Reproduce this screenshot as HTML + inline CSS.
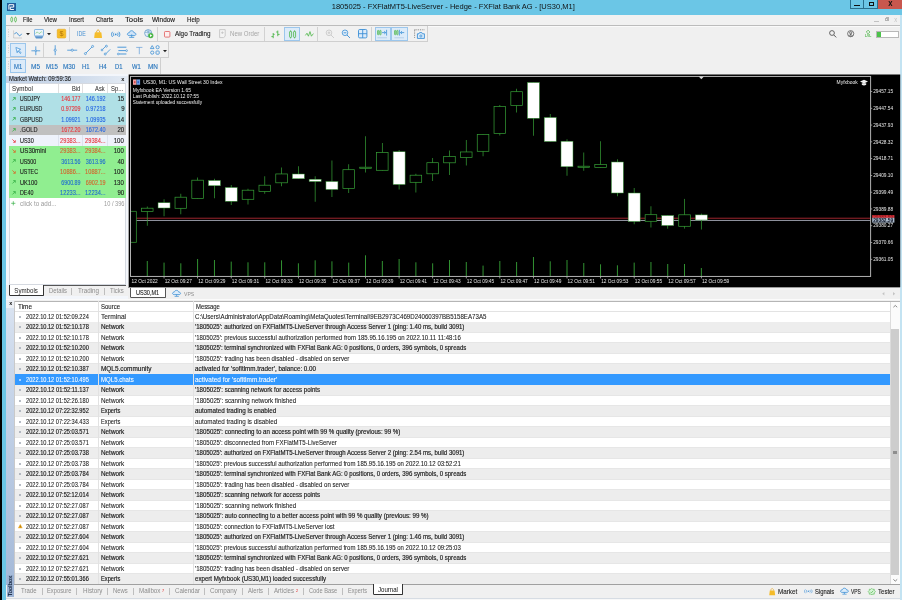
<!DOCTYPE html>
<html lang="en"><head><meta charset="utf-8"><title>1805025 - FXFlatMT5-LiveServer - Hedge - FXFlat Bank AG - [US30,M1]</title>
<style>html,body{margin:0;padding:0}body{width:902px;height:600px;overflow:hidden;position:relative;background:#f0f0f0;font-family:"Liberation Sans", sans-serif;}
#w{will-change:transform;position:absolute;left:0;top:0;width:902px;height:600px;overflow:hidden}
#w div,#w svg,#w span{position:absolute}#w span{white-space:pre}svg{overflow:visible}</style></head>
<body><div id="w">
<div style="left:0.00px;top:0.00px;width:902.00px;height:600.00px;background:#6bc6e6;"></div>
<div style="left:0.00px;top:0.00px;width:2.40px;height:600.00px;background:#000;"></div>
<div style="left:6.20px;top:14.60px;width:894.00px;height:585.40px;background:#f0f0f0;"></div>
<div style="left:900.20px;top:14.60px;width:1.80px;height:585.40px;background:#c3e3f2;"></div>
<div style="left:7.20px;top:2.50px;width:8.60px;height:8.20px;background:#1d5c9b;"></div>
<svg style="left:7.2px;top:2.5px" width="8.6" height="8.2" viewBox="0 0 86 82"><path d="M19 66V17H67V41H33V65H69" fill="none" stroke="#fff" stroke-width="10"/></svg>
<div style="left:849.50px;top:0.00px;width:14.70px;height:9.30px;background:#6bc6e6;box-sizing:border-box;border:0.6px solid #2a6f8c;border-top:none"></div>
<div style="left:864.40px;top:0.00px;width:13.60px;height:9.30px;background:#6bc6e6;box-sizing:border-box;border:0.6px solid #2a6f8c;border-top:none;border-left:none"></div>
<div style="left:878.00px;top:0.00px;width:23.50px;height:9.30px;background:#c8574e;"></div>
<div style="left:854.20px;top:4.60px;width:5.40px;height:1.50px;background:#111;"></div>
<div style="left:869.20px;top:2.40px;width:4.60px;height:3.60px;background:transparent;box-sizing:border-box;border:1.1px solid #111;border-top-width:1.5px"></div>
<div style="left:6.20px;top:14.60px;width:894.00px;height:10.60px;background:#f1f1f1;"></div>
<div style="left:6.20px;top:24.90px;width:894.00px;height:0.90px;background:#bcbcbc;"></div>
<div style="left:6.20px;top:25.80px;width:894.00px;height:0.60px;background:#fafafa;"></div>
<svg style="left:9.8px;top:16.2px" width="7.4" height="7" viewBox="0 0 74 70"><g fill="none" stroke="#4cb648" stroke-width="7"><rect x="8" y="16" width="18" height="38" rx="5"/><rect x="46" y="16" width="18" height="38" rx="5"/><path d="M17 6v10M17 54v10M55 6v10M55 54v10"/></g></svg>
<div style="left:874.00px;top:20.80px;width:4.80px;height:0.80px;background:#c2c2c2;"></div>
<div style="left:884.60px;top:18.30px;width:3.20px;height:3.20px;background:transparent;box-sizing:border-box;border:0.7px solid #b4b4b4"></div>
<div style="left:885.80px;top:17.40px;width:3.20px;height:3.20px;background:transparent;box-sizing:border-box;border:0.7px solid #b4b4b4;border-left:none;border-bottom:none"></div>
<div style="left:6.20px;top:25.80px;width:421.50px;height:16.10px;background:#f1f1f1;box-sizing:border-box;border-right:0.7px solid #cfcfcf;border-bottom:0.7px solid #cfcfcf"></div>
<div style="left:6.20px;top:41.90px;width:163.20px;height:15.90px;background:#f1f1f1;box-sizing:border-box;border-right:0.7px solid #cfcfcf;border-bottom:0.7px solid #cfcfcf"></div>
<div style="left:6.20px;top:57.80px;width:155.20px;height:16.60px;background:#f1f1f1;box-sizing:border-box;border-right:0.7px solid #cfcfcf"></div>
<div style="left:69.45px;top:27.00px;width:0.70px;height:13.80px;background:#d2d2d2;"></div>
<div style="left:157.15px;top:27.00px;width:0.70px;height:13.80px;background:#d2d2d2;"></div>
<div style="left:264.45px;top:27.00px;width:0.70px;height:13.80px;background:#d2d2d2;"></div>
<div style="left:317.15px;top:27.00px;width:0.70px;height:13.80px;background:#d2d2d2;"></div>
<div style="left:371.15px;top:27.00px;width:0.70px;height:13.80px;background:#d2d2d2;"></div>
<div style="left:42.85px;top:43.20px;width:0.70px;height:13.40px;background:#d2d2d2;"></div>
<div style="left:8.3px;top:29px;width:1px;height:10px;background:repeating-linear-gradient(#d6d6d6 0 0.8px,transparent 0.8px 1.7px)"></div>
<div style="left:8.3px;top:45px;width:1px;height:10px;background:repeating-linear-gradient(#d6d6d6 0 0.8px,transparent 0.8px 1.7px)"></div>
<div style="left:8.3px;top:61px;width:1px;height:10px;background:repeating-linear-gradient(#d6d6d6 0 0.8px,transparent 0.8px 1.7px)"></div>
<div style="left:284.00px;top:26.70px;width:15.80px;height:14.20px;background:#dcebf9;box-sizing:border-box;border:0.8px solid #9bc6ec"></div>
<div style="left:374.50px;top:26.70px;width:16.20px;height:14.20px;background:#dcebf9;box-sizing:border-box;border:0.8px solid #9bc6ec"></div>
<div style="left:391.40px;top:26.70px;width:16.40px;height:14.20px;background:#dcebf9;box-sizing:border-box;border:0.8px solid #9bc6ec"></div>
<div style="left:10.40px;top:43.30px;width:15.60px;height:13.30px;background:#dcebf9;box-sizing:border-box;border:0.8px solid #9bc6ec"></div>
<div style="left:10.40px;top:59.20px;width:15.60px;height:13.60px;background:#dcebf9;box-sizing:border-box;border:0.8px solid #9bc6ec"></div>
<svg style="left:13.00px;top:29.50px" width="9.20" height="9.00" viewBox="0 0 92 90"><path d="M6 4v76h84" fill="none" stroke="#b9b9b9" stroke-width="6"/><path d="M16 42C26 20 40 22 50 42S74 62 86 38" fill="none" stroke="#2f86cc" stroke-width="9"/></svg>
<svg style="left:25.50px;top:33.20px" width="4.00" height="2.20" viewBox="0 0 40 22"><path d="M0 0h40L20 22z" fill="#222"/></svg>
<svg style="left:34.00px;top:28.90px" width="10.00" height="9.90" viewBox="0 0 100 99"><rect x="5" y="5" width="90" height="64" rx="6" fill="#eef5fc" stroke="#6aa6dc" stroke-width="8"/><path d="M18 44c8-16 16-16 24-6s16 8 22-2 10-10 18-2" fill="none" stroke="#4cb648" stroke-width="7" stroke-dasharray="9 4"/><path d="M6 72h88l-14 24H20z" fill="#5a93cc"/></svg>
<svg style="left:47.00px;top:33.20px" width="4.00" height="2.20" viewBox="0 0 40 22"><path d="M0 0h40L20 22z" fill="#222"/></svg>
<svg style="left:57.20px;top:29.30px" width="9.00" height="9.30" viewBox="0 0 90 93"><rect x="2" y="2" width="86" height="89" rx="12" fill="#f6bd27" stroke="#e3a21a" stroke-width="5"/><text x="45" y="72" font-size="72" font-family="Liberation Sans, sans-serif" text-anchor="middle" fill="#b47708">$</text></svg>
<svg style="left:94.40px;top:29.00px" width="8.20" height="9.40" viewBox="0 0 82 94"><path d="M26 34c0-32 30-32 30 0" fill="none" stroke="#e2a21a" stroke-width="10"/><path d="M14 32h54c4 0 5 2 6 6l6 46c0 4-2 6-6 6H8c-4 0-6-2-6-6l6-46c1-4 2-6 6-6z" fill="#f5bd2c"/></svg>
<svg style="left:110.60px;top:30.60px" width="9.40" height="6.80" viewBox="0 0 94 68"><g fill="none" stroke="#3b8fd6" stroke-width="9"><path d="M30 18c-8 10-8 22 0 32M64 18c8 10 8 22 0 32M16 8c-14 16-14 36 0 52M78 8c14 16 14 36 0 52"/></g><circle cx="47" cy="34" r="9" fill="#3b8fd6"/></svg>
<svg style="left:127.30px;top:30.00px" width="9.40" height="8.20" viewBox="0 0 94 82"><path d="M22 56c-26 0-22-30 0-28 4-28 44-28 48 0 24-2 26 28 2 28z" fill="#cfe3f7" stroke="#3b8fd6" stroke-width="8"/><path d="M47 44v28M22 74h50" stroke="#3b8fd6" stroke-width="8" fill="none"/></svg>
<svg style="left:144.20px;top:29.30px" width="9.60" height="9.40" viewBox="0 0 96 94"><circle cx="42" cy="42" r="36" fill="#e6f0fa" stroke="#6a9fc8" stroke-width="8"/><path d="M42 6v72M8 34h66M22 14c14 14 30 14 44 0" fill="none" stroke="#6a9fc8" stroke-width="6"/><circle cx="68" cy="66" r="26" fill="#4cb648"/><path d="M60 52l22 14-22 14z" fill="#fff"/></svg>
<svg style="left:164.30px;top:30.60px" width="6.40" height="6.60" viewBox="0 0 64 66"><rect x="5" y="5" width="54" height="56" rx="8" fill="#fdeeee" stroke="#e05a5a" stroke-width="8"/></svg>
<svg style="left:219.30px;top:29.40px" width="6.80" height="9.20" viewBox="0 0 68 92"><path d="M6 6h56v66l-16 14H6z" fill="#f4f4f4" stroke="#b9b9b9" stroke-width="7"/><path d="M34 24v26M20 37h28" stroke="#b9b9b9" stroke-width="6"/></svg>
<svg style="left:271.20px;top:29.60px" width="9.40" height="8.80" viewBox="0 0 94 88"><g fill="none" stroke="#4cb648" stroke-width="9"><path d="M22 30v52M4 66h18M22 44h14M68 6v56M52 20h16M68 44h18"/></g></svg>
<svg style="left:288.90px;top:29.60px" width="7.20" height="8.80" viewBox="0 0 72 88"><g fill="none" stroke="#4cb648" stroke-width="8"><rect x="6" y="14" width="20" height="60" rx="6"/><rect x="46" y="14" width="20" height="60" rx="6"/><path d="M16 4v10M16 74v10M56 4v10M56 74v10"/></g></svg>
<svg style="left:305.00px;top:30.60px" width="8.80" height="6.80" viewBox="0 0 88 68"><path d="M4 44l16-22 14 30 16-46 14 46 20-26" fill="none" stroke="#4cb648" stroke-width="8"/></svg>
<svg style="left:324.60px;top:29.40px" width="9.60" height="9.60" viewBox="0 0 96 96"><circle cx="40" cy="38" r="28" fill="none" stroke="#c4c4c4" stroke-width="8"/><path d="M60 60l30 30M26 38h28M40 24v28" stroke="#c4c4c4" stroke-width="8" fill="none"/></svg>
<svg style="left:341.30px;top:29.40px" width="9.60" height="9.60" viewBox="0 0 96 96"><circle cx="40" cy="38" r="28" fill="#e3effa" stroke="#3b8fd6" stroke-width="8"/><path d="M60 60l30 30M26 38h28" stroke="#3b8fd6" stroke-width="9" fill="none"/></svg>
<svg style="left:358.20px;top:29.40px" width="9.40" height="9.40" viewBox="0 0 94 94"><rect x="5" y="5" width="84" height="84" rx="12" fill="#dcebf9" stroke="#3b8fd6" stroke-width="9"/><path d="M47 5v84M5 47h84" stroke="#3b8fd6" stroke-width="9"/></svg>
<svg style="left:377.30px;top:29.40px" width="10.60" height="9.60" viewBox="0 0 106 96"><g fill="none" stroke="#4cb648" stroke-width="8"><rect x="6" y="14" width="12" height="44" rx="5"/><rect x="28" y="14" width="12" height="44" rx="5"/></g><path d="M50 36h36M72 22l16 14-16 14M96 8v58" fill="none" stroke="#3b8fd6" stroke-width="8"/><path d="M4 88h96" stroke="#9dbfe0" stroke-width="6"/></svg>
<svg style="left:394.30px;top:29.40px" width="10.60" height="9.60" viewBox="0 0 106 96"><g fill="none" stroke="#4cb648" stroke-width="8"><rect x="6" y="14" width="12" height="44" rx="5"/><rect x="28" y="14" width="12" height="44" rx="5"/></g><path d="M54 8v58M66 36h36M80 22l-16 14 16 14" fill="none" stroke="#3b8fd6" stroke-width="8"/><path d="M4 88h96" stroke="#9dbfe0" stroke-width="6"/></svg>
<svg style="left:414.00px;top:29.00px" width="11.00" height="10.00" viewBox="0 0 110 100"><path d="M6 8h98M6 8v80" stroke="#555" stroke-width="7" stroke-dasharray="9 9" fill="none"/><path d="M34 48h16l6-12h22l6 12h20v46H34z" fill="#e0eefb" stroke="#3b8fd6" stroke-width="9"/><circle cx="69" cy="70" r="11" fill="none" stroke="#3b8fd6" stroke-width="8"/></svg>
<svg style="left:829.00px;top:29.60px" width="7.60" height="7.80" viewBox="0 0 76 78"><circle cx="30" cy="30" r="24" fill="none" stroke="#444" stroke-width="8"/><path d="M48 50l24 24" stroke="#444" stroke-width="9"/></svg>
<svg style="left:847.00px;top:30.00px" width="7.40" height="7.40" viewBox="0 0 74 74"><circle cx="37" cy="37" r="31" fill="none" stroke="#444" stroke-width="7"/><circle cx="37" cy="28" r="11" fill="none" stroke="#444" stroke-width="7"/><path d="M37 40v28M37 44L16 60M37 44l21 16" stroke="#444" stroke-width="6" fill="none"/></svg>
<svg style="left:866.00px;top:29.80px" width="4.20" height="4.00" viewBox="0 0 42 40"><path d="M21 2l18 18-18 18L3 20z" fill="none" stroke="#4cb648" stroke-width="8"/></svg>
<div style="left:876.00px;top:31.10px;width:22.60px;height:6.70px;background:#fff;box-sizing:border-box;border:0.7px solid #b8b8b8"></div>
<div style="left:876.70px;top:31.80px;width:4.20px;height:5.30px;background:#4cc24a;"></div>
<svg style="left:15.00px;top:46.80px" width="7.20" height="7.20" viewBox="0 0 84 90"><path d="M8 6l60 22-24 12 30 34-10 8-30-34-10 24z" fill="#eef5fc" stroke="#3b8fd6" stroke-width="9" stroke-linejoin="round"/></svg>
<svg style="left:30.60px;top:45.60px" width="9.60" height="9.60" viewBox="0 0 96 96"><path d="M48 4v88M4 48h88" stroke="#3b8fd6" stroke-width="8"/><circle cx="48" cy="48" r="8" fill="#f0f0f0" stroke="#3b8fd6" stroke-width="6"/></svg>
<svg style="left:53.40px;top:45.20px" width="4.40" height="10.40" viewBox="0 0 44 104"><path d="M22 2v100" stroke="#3b8fd6" stroke-width="8"/><circle cx="22" cy="52" r="11" fill="#f0f0f0" stroke="#3b8fd6" stroke-width="7"/></svg>
<svg style="left:67.00px;top:48.20px" width="10.40" height="4.40" viewBox="0 0 104 44"><path d="M2 22h100" stroke="#3b8fd6" stroke-width="8"/><circle cx="52" cy="22" r="11" fill="#f0f0f0" stroke="#3b8fd6" stroke-width="7"/></svg>
<svg style="left:84.00px;top:45.40px" width="10.00" height="10.00" viewBox="0 0 100 100"><path d="M16 84L84 16" stroke="#3b8fd6" stroke-width="8"/><circle cx="14" cy="86" r="10" fill="#f0f0f0" stroke="#3b8fd6" stroke-width="7"/><circle cx="86" cy="14" r="10" fill="#f0f0f0" stroke="#3b8fd6" stroke-width="7"/></svg>
<svg style="left:100.60px;top:45.40px" width="10.00" height="10.00" viewBox="0 0 100 100"><path d="M8 52L52 8M44 92L92 44" stroke="#3b8fd6" stroke-width="8"/><circle cx="54" cy="12" r="10" fill="#f0f0f0" stroke="#3b8fd6" stroke-width="7"/><circle cx="10" cy="50" r="9" fill="#f0f0f0" stroke="#3b8fd6" stroke-width="7"/><circle cx="42" cy="90" r="10" fill="#f0f0f0" stroke="#3b8fd6" stroke-width="7"/></svg>
<svg style="left:117.30px;top:45.80px" width="10.80" height="9.40" viewBox="0 0 108 94"><path d="M4 12h90M14 46h80M14 80h80" stroke="#3b8fd6" stroke-width="9"/><circle cx="96" cy="46" r="9" fill="#f0f0f0" stroke="#3b8fd6" stroke-width="6"/><circle cx="12" cy="80" r="9" fill="#f0f0f0" stroke="#3b8fd6" stroke-width="6"/></svg>
<svg style="left:136.20px;top:46.50px" width="6.60" height="7.20" viewBox="0 0 66 72"><path d="M2 4h62M33 4v68" stroke="#5f9bd6" stroke-width="7" fill="none"/></svg>
<svg style="left:150.30px;top:45.40px" width="10.00" height="10.00" viewBox="0 0 100 100"><g fill="none" stroke="#3b8fd6" stroke-width="8"><path d="M22 6l18 30H4z"/><circle cx="76" cy="22" r="16"/><circle cx="22" cy="76" r="16"/><rect x="60" y="60" width="32" height="32" rx="6"/></g></svg>
<svg style="left:163.20px;top:49.50px" width="4.00" height="2.20" viewBox="0 0 40 22"><path d="M0 0h40L20 22z" fill="#222"/></svg>
<div style="left:6.20px;top:74.40px;width:122.00px;height:225.00px;background:#f3f6fb;"></div>
<div style="left:6.20px;top:75.50px;width:121.80px;height:7.40px;background:linear-gradient(90deg,#c4d3e7,#ccd9ea 55%,#e4ebf4);"></div>
<div style="left:8.60px;top:83.40px;width:117.20px;height:201.80px;background:#fff;box-sizing:border-box;border:0.6px solid #d5d9e0"></div>
<div style="left:8.90px;top:93.00px;width:116.60px;height:0.50px;background:#e2e2e2;"></div>
<div style="left:58.10px;top:83.80px;width:0.60px;height:9.40px;background:#e0e0e0;"></div>
<div style="left:82.30px;top:83.80px;width:0.60px;height:9.40px;background:#e0e0e0;"></div>
<div style="left:107.10px;top:83.80px;width:0.60px;height:9.40px;background:#e0e0e0;"></div>
<div style="left:8.90px;top:93.30px;width:116.70px;height:10.52px;background:#b0e0e6;"></div>
<svg style="left:11.80px;top:96.53px" width="3.90" height="3.90" viewBox="0 0 39 39"><path d="M4 35L32 7M12 6h21v21" fill="none" stroke="#35b045" stroke-width="8"/></svg>
<div style="left:8.90px;top:103.77px;width:116.70px;height:10.52px;background:#b0e0e6;"></div>
<svg style="left:11.80px;top:107.00px" width="3.90" height="3.90" viewBox="0 0 39 39"><path d="M4 35L32 7M12 6h21v21" fill="none" stroke="#35b045" stroke-width="8"/></svg>
<div style="left:8.90px;top:114.24px;width:116.70px;height:10.52px;background:#b0e0e6;"></div>
<svg style="left:11.80px;top:117.47px" width="3.90" height="3.90" viewBox="0 0 39 39"><path d="M4 35L32 7M12 6h21v21" fill="none" stroke="#35b045" stroke-width="8"/></svg>
<div style="left:8.90px;top:124.71px;width:116.70px;height:10.52px;background:#c0c0c0;"></div>
<svg style="left:11.80px;top:127.95px" width="3.90" height="3.90" viewBox="0 0 39 39"><path d="M4 35L32 7M12 6h21v21" fill="none" stroke="#35b045" stroke-width="8"/></svg>
<div style="left:8.90px;top:135.18px;width:116.70px;height:10.52px;background:#eef2fb;"></div>
<svg style="left:11.80px;top:138.72px" width="3.90" height="3.90" viewBox="0 0 39 39"><path d="M4 4l28 28M12 33h21V12" fill="none" stroke="#e8343c" stroke-width="8"/></svg>
<div style="left:58.10px;top:135.18px;width:0.60px;height:10.47px;background:#dde2ee;"></div>
<div style="left:82.30px;top:135.18px;width:0.60px;height:10.47px;background:#dde2ee;"></div>
<div style="left:107.10px;top:135.18px;width:0.60px;height:10.47px;background:#dde2ee;"></div>
<div style="left:8.90px;top:145.65px;width:116.70px;height:10.52px;background:#90ee90;"></div>
<svg style="left:11.80px;top:149.19px" width="3.90" height="3.90" viewBox="0 0 39 39"><path d="M4 4l28 28M12 33h21V12" fill="none" stroke="#d86a2a" stroke-width="8"/></svg>
<div style="left:8.90px;top:156.12px;width:116.70px;height:10.52px;background:#90ee90;"></div>
<svg style="left:11.80px;top:159.36px" width="3.90" height="3.90" viewBox="0 0 39 39"><path d="M4 35L32 7M12 6h21v21" fill="none" stroke="#35b045" stroke-width="8"/></svg>
<div style="left:8.90px;top:166.59px;width:116.70px;height:10.52px;background:#90ee90;"></div>
<svg style="left:11.80px;top:170.12px" width="3.90" height="3.90" viewBox="0 0 39 39"><path d="M4 4l28 28M12 33h21V12" fill="none" stroke="#d86a2a" stroke-width="8"/></svg>
<div style="left:8.90px;top:177.06px;width:116.70px;height:10.52px;background:#90ee90;"></div>
<svg style="left:11.80px;top:180.30px" width="3.90" height="3.90" viewBox="0 0 39 39"><path d="M4 35L32 7M12 6h21v21" fill="none" stroke="#35b045" stroke-width="8"/></svg>
<div style="left:8.90px;top:187.53px;width:116.70px;height:10.52px;background:#90ee90;"></div>
<svg style="left:11.80px;top:190.77px" width="3.90" height="3.90" viewBox="0 0 39 39"><path d="M4 35L32 7M12 6h21v21" fill="none" stroke="#35b045" stroke-width="8"/></svg>
<svg style="left:11.40px;top:201.00px" width="4.60" height="4.60" viewBox="0 0 46 46"><path d="M23 2v42M2 23h42" stroke="#35b045" stroke-width="7"/></svg>
<div style="left:6.20px;top:285.20px;width:122.00px;height:11.00px;background:#f0f0f0;"></div>
<div style="left:8.60px;top:285.00px;width:117.40px;height:0.70px;background:#555;"></div>
<div style="left:9.30px;top:284.90px;width:34.40px;height:10.70px;background:#fff;box-sizing:border-box;border:0.8px solid #333;border-top:none;border-radius:0 0 1.5px 1.5px"></div>
<svg style="left:128px;top:74px;overflow:hidden" width="773.00" height="214.00" viewBox="0 0 773.00 214.00" font-family="Liberation Sans, sans-serif"><rect x="0.70" y="0.50" width="771.50" height="212.70" fill="#000"/><rect x="2.60" y="143.60" width="740.00" height="1.5" fill="#6f1a20"/><rect x="2.60" y="146.00" width="740.00" height="1.0" fill="#8d909c"/><path d="M3.00 137.40H8.45V168.40H3.00" fill="#000" stroke="#37a237" stroke-width="0.7"/><rect x="18.90" y="132.50" width="0.7" height="19.25" fill="#37a237"/><rect x="13.45" y="134.20" width="11.60" height="3.35" fill="#000" stroke="#37a237" stroke-width="0.7"/><rect x="18.80" y="187.00" width="0.9" height="15.40" fill="#37a237"/><rect x="35.69" y="125.25" width="0.7" height="17.00" fill="#37a237"/><rect x="30.04" y="128.75" width="12.00" height="5.25" fill="#fff" stroke="#2f8f2f" stroke-width="0.5"/><rect x="35.59" y="188.60" width="0.9" height="13.80" fill="#37a237"/><rect x="52.48" y="119.75" width="0.7" height="20.50" fill="#37a237"/><rect x="47.03" y="123.20" width="11.60" height="11.10" fill="#000" stroke="#37a237" stroke-width="0.7"/><rect x="52.38" y="189.30" width="0.9" height="13.10" fill="#37a237"/><rect x="69.27" y="103.50" width="0.7" height="21.25" fill="#37a237"/><rect x="63.82" y="106.20" width="11.60" height="18.35" fill="#000" stroke="#37a237" stroke-width="0.7"/><rect x="69.17" y="185.00" width="0.9" height="17.40" fill="#37a237"/><rect x="86.06" y="104.75" width="0.7" height="19.50" fill="#37a237"/><rect x="80.41" y="106.50" width="12.00" height="5.25" fill="#fff" stroke="#2f8f2f" stroke-width="0.5"/><rect x="85.96" y="186.00" width="0.9" height="16.40" fill="#37a237"/><rect x="102.85" y="111.00" width="0.7" height="20.00" fill="#37a237"/><rect x="97.20" y="113.50" width="12.00" height="13.75" fill="#fff" stroke="#2f8f2f" stroke-width="0.5"/><rect x="102.75" y="187.60" width="0.9" height="14.80" fill="#37a237"/><rect x="119.64" y="114.75" width="0.7" height="15.75" fill="#37a237"/><rect x="114.19" y="116.20" width="11.60" height="9.10" fill="#000" stroke="#37a237" stroke-width="0.7"/><rect x="119.54" y="188.30" width="0.9" height="14.10" fill="#37a237"/><rect x="136.43" y="102.25" width="0.7" height="17.50" fill="#37a237"/><rect x="130.98" y="111.20" width="11.60" height="6.35" fill="#000" stroke="#37a237" stroke-width="0.7"/><rect x="136.33" y="188.30" width="0.9" height="14.10" fill="#37a237"/><rect x="153.22" y="93.50" width="0.7" height="18.75" fill="#37a237"/><rect x="147.77" y="99.95" width="11.60" height="8.85" fill="#000" stroke="#37a237" stroke-width="0.7"/><rect x="153.12" y="186.30" width="0.9" height="16.10" fill="#37a237"/><rect x="170.01" y="92.25" width="0.7" height="12.50" fill="#37a237"/><rect x="164.36" y="100.00" width="12.00" height="4.75" fill="#fff" stroke="#2f8f2f" stroke-width="0.5"/><rect x="169.91" y="189.30" width="0.9" height="13.10" fill="#37a237"/><rect x="186.80" y="102.25" width="0.7" height="25.50" fill="#37a237"/><rect x="181.15" y="105.25" width="12.00" height="2.25" fill="#fff" stroke="#2f8f2f" stroke-width="0.5"/><rect x="186.70" y="186.30" width="0.9" height="16.10" fill="#37a237"/><rect x="203.59" y="86.50" width="0.7" height="36.50" fill="#37a237"/><rect x="197.94" y="107.50" width="12.00" height="8.00" fill="#fff" stroke="#2f8f2f" stroke-width="0.5"/><rect x="203.49" y="187.30" width="0.9" height="15.10" fill="#37a237"/><rect x="220.38" y="90.25" width="0.7" height="28.75" fill="#37a237"/><rect x="214.93" y="95.70" width="11.60" height="18.85" fill="#000" stroke="#37a237" stroke-width="0.7"/><rect x="220.28" y="188.60" width="0.9" height="13.80" fill="#37a237"/><rect x="237.17" y="62.25" width="0.7" height="36.25" fill="#37a237"/><rect x="231.72" y="93.20" width="11.60" height="1.10" fill="#000" stroke="#37a237" stroke-width="0.7"/><rect x="237.07" y="181.30" width="0.9" height="21.10" fill="#37a237"/><rect x="253.96" y="69.00" width="0.7" height="27.50" fill="#37a237"/><rect x="248.51" y="78.45" width="11.60" height="17.85" fill="#000" stroke="#37a237" stroke-width="0.7"/><rect x="253.86" y="187.00" width="0.9" height="15.40" fill="#37a237"/><rect x="270.75" y="76.00" width="0.7" height="39.50" fill="#37a237"/><rect x="265.10" y="77.75" width="12.00" height="32.75" fill="#fff" stroke="#2f8f2f" stroke-width="0.5"/><rect x="270.65" y="185.00" width="0.9" height="17.40" fill="#37a237"/><rect x="287.54" y="99.75" width="0.7" height="18.75" fill="#37a237"/><rect x="282.09" y="101.20" width="11.60" height="7.10" fill="#000" stroke="#37a237" stroke-width="0.7"/><rect x="287.44" y="188.30" width="0.9" height="14.10" fill="#37a237"/><rect x="304.33" y="84.00" width="0.7" height="23.00" fill="#37a237"/><rect x="298.88" y="88.70" width="11.60" height="11.10" fill="#000" stroke="#37a237" stroke-width="0.7"/><rect x="304.23" y="189.30" width="0.9" height="13.10" fill="#37a237"/><rect x="321.12" y="76.50" width="0.7" height="24.50" fill="#37a237"/><rect x="315.67" y="82.45" width="11.60" height="6.35" fill="#000" stroke="#37a237" stroke-width="0.7"/><rect x="321.02" y="186.00" width="0.9" height="16.40" fill="#37a237"/><rect x="337.91" y="66.00" width="0.7" height="25.50" fill="#37a237"/><rect x="332.46" y="77.95" width="11.60" height="5.60" fill="#000" stroke="#37a237" stroke-width="0.7"/><rect x="337.81" y="188.00" width="0.9" height="14.40" fill="#37a237"/><rect x="354.70" y="60.25" width="0.7" height="22.00" fill="#37a237"/><rect x="349.25" y="60.45" width="11.60" height="16.85" fill="#000" stroke="#37a237" stroke-width="0.7"/><rect x="354.60" y="191.60" width="0.9" height="10.80" fill="#37a237"/><rect x="371.49" y="31.00" width="0.7" height="30.50" fill="#37a237"/><rect x="366.04" y="32.45" width="11.60" height="27.10" fill="#000" stroke="#37a237" stroke-width="0.7"/><rect x="371.39" y="187.00" width="0.9" height="15.40" fill="#37a237"/><rect x="388.28" y="14.75" width="0.7" height="23.75" fill="#37a237"/><rect x="382.83" y="17.70" width="11.60" height="13.85" fill="#000" stroke="#37a237" stroke-width="0.7"/><rect x="388.18" y="188.00" width="0.9" height="14.40" fill="#37a237"/><rect x="405.07" y="8.50" width="0.7" height="53.25" fill="#37a237"/><rect x="399.42" y="8.50" width="12.00" height="35.75" fill="#fff" stroke="#2f8f2f" stroke-width="0.5"/><rect x="404.97" y="183.00" width="0.9" height="19.40" fill="#37a237"/><rect x="421.86" y="40.00" width="0.7" height="27.50" fill="#37a237"/><rect x="416.21" y="43.50" width="12.00" height="24.00" fill="#fff" stroke="#2f8f2f" stroke-width="0.5"/><rect x="421.76" y="187.30" width="0.9" height="15.10" fill="#37a237"/><rect x="438.65" y="65.25" width="0.7" height="36.50" fill="#37a237"/><rect x="433.00" y="67.25" width="12.00" height="25.50" fill="#fff" stroke="#2f8f2f" stroke-width="0.5"/><rect x="438.55" y="186.00" width="0.9" height="16.40" fill="#37a237"/><rect x="455.44" y="78.50" width="0.7" height="18.25" fill="#37a237"/><rect x="449.99" y="92.20" width="11.60" height="1.10" fill="#000" stroke="#37a237" stroke-width="0.7"/><rect x="455.34" y="189.00" width="0.9" height="13.40" fill="#37a237"/><rect x="472.23" y="67.25" width="0.7" height="26.50" fill="#37a237"/><rect x="466.78" y="90.45" width="11.60" height="3.10" fill="#000" stroke="#37a237" stroke-width="0.7"/><rect x="472.13" y="190.30" width="0.9" height="12.10" fill="#37a237"/><rect x="489.02" y="85.25" width="0.7" height="37.00" fill="#37a237"/><rect x="483.37" y="88.00" width="12.00" height="31.00" fill="#fff" stroke="#2f8f2f" stroke-width="0.5"/><rect x="488.92" y="191.30" width="0.9" height="11.10" fill="#37a237"/><rect x="505.81" y="114.00" width="0.7" height="36.25" fill="#37a237"/><rect x="500.16" y="119.00" width="12.00" height="28.50" fill="#fff" stroke="#2f8f2f" stroke-width="0.5"/><rect x="505.71" y="188.60" width="0.9" height="13.80" fill="#37a237"/><rect x="522.60" y="132.25" width="0.7" height="21.25" fill="#37a237"/><rect x="517.15" y="140.70" width="11.60" height="6.60" fill="#000" stroke="#37a237" stroke-width="0.7"/><rect x="522.50" y="188.00" width="0.9" height="14.40" fill="#37a237"/><rect x="539.39" y="141.50" width="0.7" height="13.20" fill="#37a237"/><rect x="533.74" y="141.50" width="12.00" height="10.00" fill="#fff" stroke="#2f8f2f" stroke-width="0.5"/><rect x="539.29" y="190.00" width="0.9" height="12.40" fill="#37a237"/><rect x="556.18" y="124.90" width="0.7" height="29.70" fill="#37a237"/><rect x="550.73" y="140.80" width="11.60" height="11.50" fill="#000" stroke="#37a237" stroke-width="0.7"/><rect x="556.08" y="190.00" width="0.9" height="12.40" fill="#37a237"/><rect x="572.97" y="139.60" width="0.7" height="15.90" fill="#37a237"/><rect x="567.32" y="140.90" width="12.00" height="5.10" fill="#fff" stroke="#2f8f2f" stroke-width="0.5"/><rect x="572.87" y="194.00" width="0.9" height="8.40" fill="#37a237"/><rect x="2.50" y="2.45" width="740.10" height="200.00" fill="none" stroke="#b2b2b2" stroke-width="1"/><text x="3.50" y="208.70" font-size="4.8" fill="#e8e8e8" textLength="26.3" lengthAdjust="spacingAndGlyphs">12 Oct 2022</text><rect x="35.64" y="202.40" width="0.8" height="2" fill="#b2b2b2"/><text x="36.64" y="208.70" font-size="4.8" fill="#e8e8e8" textLength="27.3" lengthAdjust="spacingAndGlyphs">12 Oct 09:27</text><rect x="69.22" y="202.40" width="0.8" height="2" fill="#b2b2b2"/><text x="70.22" y="208.70" font-size="4.8" fill="#e8e8e8" textLength="27.3" lengthAdjust="spacingAndGlyphs">12 Oct 09:29</text><rect x="102.80" y="202.40" width="0.8" height="2" fill="#b2b2b2"/><text x="103.80" y="208.70" font-size="4.8" fill="#e8e8e8" textLength="27.3" lengthAdjust="spacingAndGlyphs">12 Oct 09:31</text><rect x="136.38" y="202.40" width="0.8" height="2" fill="#b2b2b2"/><text x="137.38" y="208.70" font-size="4.8" fill="#e8e8e8" textLength="27.3" lengthAdjust="spacingAndGlyphs">12 Oct 09:33</text><rect x="169.96" y="202.40" width="0.8" height="2" fill="#b2b2b2"/><text x="170.96" y="208.70" font-size="4.8" fill="#e8e8e8" textLength="27.3" lengthAdjust="spacingAndGlyphs">12 Oct 09:35</text><rect x="203.54" y="202.40" width="0.8" height="2" fill="#b2b2b2"/><text x="204.54" y="208.70" font-size="4.8" fill="#e8e8e8" textLength="27.3" lengthAdjust="spacingAndGlyphs">12 Oct 09:37</text><rect x="237.12" y="202.40" width="0.8" height="2" fill="#b2b2b2"/><text x="238.12" y="208.70" font-size="4.8" fill="#e8e8e8" textLength="27.3" lengthAdjust="spacingAndGlyphs">12 Oct 09:39</text><rect x="270.70" y="202.40" width="0.8" height="2" fill="#b2b2b2"/><text x="271.70" y="208.70" font-size="4.8" fill="#e8e8e8" textLength="27.3" lengthAdjust="spacingAndGlyphs">12 Oct 09:41</text><rect x="304.28" y="202.40" width="0.8" height="2" fill="#b2b2b2"/><text x="305.28" y="208.70" font-size="4.8" fill="#e8e8e8" textLength="27.3" lengthAdjust="spacingAndGlyphs">12 Oct 09:43</text><rect x="337.86" y="202.40" width="0.8" height="2" fill="#b2b2b2"/><text x="338.86" y="208.70" font-size="4.8" fill="#e8e8e8" textLength="27.3" lengthAdjust="spacingAndGlyphs">12 Oct 09:45</text><rect x="371.44" y="202.40" width="0.8" height="2" fill="#b2b2b2"/><text x="372.44" y="208.70" font-size="4.8" fill="#e8e8e8" textLength="27.3" lengthAdjust="spacingAndGlyphs">12 Oct 09:47</text><rect x="405.02" y="202.40" width="0.8" height="2" fill="#b2b2b2"/><text x="406.02" y="208.70" font-size="4.8" fill="#e8e8e8" textLength="27.3" lengthAdjust="spacingAndGlyphs">12 Oct 09:49</text><rect x="438.60" y="202.40" width="0.8" height="2" fill="#b2b2b2"/><text x="439.60" y="208.70" font-size="4.8" fill="#e8e8e8" textLength="27.3" lengthAdjust="spacingAndGlyphs">12 Oct 09:51</text><rect x="472.18" y="202.40" width="0.8" height="2" fill="#b2b2b2"/><text x="473.18" y="208.70" font-size="4.8" fill="#e8e8e8" textLength="27.3" lengthAdjust="spacingAndGlyphs">12 Oct 09:53</text><rect x="505.76" y="202.40" width="0.8" height="2" fill="#b2b2b2"/><text x="506.76" y="208.70" font-size="4.8" fill="#e8e8e8" textLength="27.3" lengthAdjust="spacingAndGlyphs">12 Oct 09:55</text><rect x="539.34" y="202.40" width="0.8" height="2" fill="#b2b2b2"/><text x="540.34" y="208.70" font-size="4.8" fill="#e8e8e8" textLength="27.3" lengthAdjust="spacingAndGlyphs">12 Oct 09:57</text><rect x="572.92" y="202.40" width="0.8" height="2" fill="#b2b2b2"/><text x="573.92" y="208.70" font-size="4.8" fill="#e8e8e8" textLength="27.3" lengthAdjust="spacingAndGlyphs">12 Oct 09:59</text><rect x="742.60" y="17.10" width="1.6" height="0.8" fill="#b2b2b2"/><text x="745.20" y="19.25" font-size="4.9" fill="#e8e8e8" textLength="20" lengthAdjust="spacingAndGlyphs">29457.15</text><rect x="742.60" y="33.88" width="1.6" height="0.8" fill="#b2b2b2"/><text x="745.20" y="36.03" font-size="4.9" fill="#e8e8e8" textLength="20" lengthAdjust="spacingAndGlyphs">29447.54</text><rect x="742.60" y="50.66" width="1.6" height="0.8" fill="#b2b2b2"/><text x="745.20" y="52.81" font-size="4.9" fill="#e8e8e8" textLength="20" lengthAdjust="spacingAndGlyphs">29437.93</text><rect x="742.60" y="67.44" width="1.6" height="0.8" fill="#b2b2b2"/><text x="745.20" y="69.59" font-size="4.9" fill="#e8e8e8" textLength="20" lengthAdjust="spacingAndGlyphs">29428.32</text><rect x="742.60" y="84.22" width="1.6" height="0.8" fill="#b2b2b2"/><text x="745.20" y="86.37" font-size="4.9" fill="#e8e8e8" textLength="20" lengthAdjust="spacingAndGlyphs">29418.71</text><rect x="742.60" y="101.00" width="1.6" height="0.8" fill="#b2b2b2"/><text x="745.20" y="103.15" font-size="4.9" fill="#e8e8e8" textLength="20" lengthAdjust="spacingAndGlyphs">29409.10</text><rect x="742.60" y="117.78" width="1.6" height="0.8" fill="#b2b2b2"/><text x="745.20" y="119.93" font-size="4.9" fill="#e8e8e8" textLength="20" lengthAdjust="spacingAndGlyphs">29399.49</text><rect x="742.60" y="134.56" width="1.6" height="0.8" fill="#b2b2b2"/><text x="745.20" y="136.71" font-size="4.9" fill="#e8e8e8" textLength="20" lengthAdjust="spacingAndGlyphs">29389.88</text><rect x="742.60" y="151.34" width="1.6" height="0.8" fill="#b2b2b2"/><text x="745.20" y="153.49" font-size="4.9" fill="#e8e8e8" textLength="20" lengthAdjust="spacingAndGlyphs">29380.27</text><rect x="742.60" y="168.12" width="1.6" height="0.8" fill="#b2b2b2"/><text x="745.20" y="170.27" font-size="4.9" fill="#e8e8e8" textLength="20" lengthAdjust="spacingAndGlyphs">29370.66</text><rect x="742.60" y="184.90" width="1.6" height="0.8" fill="#b2b2b2"/><text x="745.20" y="187.05" font-size="4.9" fill="#e8e8e8" textLength="20" lengthAdjust="spacingAndGlyphs">29361.05</text><rect x="744.20" y="141.10" width="22.2" height="2.8" fill="#d8323a"/><text x="745.20" y="144.60" font-size="4.9" fill="#7a1016"textLength="20" lengthAdjust="spacingAndGlyphs">29383.59</text><rect x="744.20" y="143.80" width="22.2" height="4.8" fill="#aab9cb"/><text x="745.20" y="148.00" font-size="4.9" fill="#0a1020" font-weight="bold"textLength="20" lengthAdjust="spacingAndGlyphs">29382.59</text><rect x="5.00" y="5.40" width="3.5" height="5.4" fill="#f0a0a0"/><rect x="8.50" y="5.40" width="3.6" height="5.4" fill="#6f9fe0"/><rect x="6.20" y="7.20" width="1.2" height="2" fill="#d03030"/><rect x="9.60" y="7.20" width="1.2" height="2" fill="#2050c0"/><text x="15.20" y="9.86" font-size="4.9" fill="#f0f0f0" textLength="79.4" lengthAdjust="spacingAndGlyphs" text-anchor="start">US30, M1:  US Wall Street 30 Index</text><text x="4.80" y="17.96" font-size="4.9" fill="#f0f0f0" textLength="58.2" lengthAdjust="spacingAndGlyphs" text-anchor="start">Myfxbook EA Version 1.65</text><text x="4.80" y="23.96" font-size="4.9" fill="#f0f0f0" textLength="66" lengthAdjust="spacingAndGlyphs" text-anchor="start">Last Publish: 2022.10.12 07:55</text><text x="4.80" y="29.76" font-size="4.9" fill="#f0f0f0" textLength="69.2" lengthAdjust="spacingAndGlyphs" text-anchor="start">Statement uploaded successfully</text><text x="708.60" y="10.16" font-size="4.9" fill="#f0f0f0" textLength="21" lengthAdjust="spacingAndGlyphs" text-anchor="start">Myfxbook</text><path d="M732.00 7.60l4-1.8 4 1.8-4 1.8zM733.80 9.20v1.6c1.4 1 3 1 4.4 0v-1.6" fill="#f0f0f0"/><path d="M570.70 2.60h5.2l-2.6 2.6z" fill="#d8d8d8"/></svg>
<div style="left:128.40px;top:287.40px;width:771.80px;height:0.80px;background:#9a9a9a;"></div>
<div style="left:130.30px;top:287.60px;width:35.40px;height:10.40px;background:#fff;box-sizing:border-box;border:0.8px solid #555;border-top:none;border-radius:0 0 1.5px 1.5px"></div>
<svg style="left:171.80px;top:290.20px" width="9.40" height="7.00" viewBox="0 0 94 70"><path d="M22 46c-24 0-20-26 0-24 4-24 42-24 46 0 22-2 24 24 2 24z" fill="#dcecfa" stroke="#3b8fd6" stroke-width="8"/><path d="M46 46v16M26 64h42" stroke="#3b8fd6" stroke-width="7" fill="none"/></svg>
<svg style="left:881.60px;top:291.80px" width="2.40" height="3.60" viewBox="0 0 24 36"><path d="M24 0v36L2 18z" fill="#c4c4c4"/></svg>
<svg style="left:892.60px;top:291.80px" width="2.40" height="3.60" viewBox="0 0 24 36"><path d="M0 0v36l22-18z" fill="#c4c4c4"/></svg>
<div style="left:6.20px;top:299.30px;width:894.00px;height:0.80px;background:#fbfbfb;"></div>
<div style="left:6.20px;top:300.10px;width:8.20px;height:285.00px;background:linear-gradient(#dbe4f1,#d3deee 10%,#a4b9d8);"></div>
<div style="left:6.20px;top:300.10px;width:8.20px;height:8.00px;background:#eef1f6;"></div>
<div style="left:14.30px;top:301.00px;width:886.00px;height:284.30px;background:#fff;"></div>
<div style="left:14.30px;top:300.90px;width:886.00px;height:0.70px;background:#b5b5b5;"></div>
<div style="left:14.00px;top:300.90px;width:0.60px;height:284.00px;background:#c9c9c9;"></div>
<div style="left:14.60px;top:311.00px;width:875.60px;height:0.50px;background:#e3e3e3;"></div>
<div style="left:14.60px;top:321.50px;width:875.70px;height:0.50px;background:#e6e6e6;"></div>
<div style="left:18.80px;top:315.85px;width:1.80px;height:1.80px;background:#a0a8b4;border-radius:50%"></div>
<div style="left:14.60px;top:321.80px;width:875.70px;height:10.49px;background:#ededed;"></div>
<div style="left:14.60px;top:331.99px;width:875.70px;height:0.50px;background:#e6e6e6;"></div>
<div style="left:18.80px;top:326.34px;width:1.80px;height:1.80px;background:#a0a8b4;border-radius:50%"></div>
<div style="left:14.60px;top:342.49px;width:875.70px;height:0.50px;background:#e6e6e6;"></div>
<div style="left:18.80px;top:336.84px;width:1.80px;height:1.80px;background:#a0a8b4;border-radius:50%"></div>
<div style="left:14.60px;top:342.79px;width:875.70px;height:10.49px;background:#ededed;"></div>
<div style="left:14.60px;top:352.98px;width:875.70px;height:0.50px;background:#e6e6e6;"></div>
<div style="left:18.80px;top:347.33px;width:1.80px;height:1.80px;background:#a0a8b4;border-radius:50%"></div>
<div style="left:14.60px;top:363.48px;width:875.70px;height:0.50px;background:#e6e6e6;"></div>
<div style="left:18.80px;top:357.83px;width:1.80px;height:1.80px;background:#a0a8b4;border-radius:50%"></div>
<div style="left:14.60px;top:363.77px;width:875.70px;height:10.49px;background:#ededed;"></div>
<div style="left:14.60px;top:373.97px;width:875.70px;height:0.50px;background:#e6e6e6;"></div>
<div style="left:18.80px;top:368.32px;width:1.80px;height:1.80px;background:#a0a8b4;border-radius:50%"></div>
<div style="left:14.60px;top:374.27px;width:875.70px;height:10.49px;background:#3399ff;"></div>
<div style="left:14.60px;top:384.46px;width:875.70px;height:0.50px;background:#3399ff;"></div>
<div style="left:18.80px;top:378.82px;width:1.80px;height:1.80px;background:#cfe3ff;border-radius:50%"></div>
<div style="left:14.60px;top:384.76px;width:875.70px;height:10.49px;background:#ededed;"></div>
<div style="left:14.60px;top:394.96px;width:875.70px;height:0.50px;background:#e6e6e6;"></div>
<div style="left:18.80px;top:389.31px;width:1.80px;height:1.80px;background:#a0a8b4;border-radius:50%"></div>
<div style="left:14.60px;top:405.45px;width:875.70px;height:0.50px;background:#e6e6e6;"></div>
<div style="left:18.80px;top:399.81px;width:1.80px;height:1.80px;background:#a0a8b4;border-radius:50%"></div>
<div style="left:14.60px;top:405.75px;width:875.70px;height:10.49px;background:#ededed;"></div>
<div style="left:14.60px;top:415.95px;width:875.70px;height:0.50px;background:#e6e6e6;"></div>
<div style="left:18.80px;top:410.30px;width:1.80px;height:1.80px;background:#a0a8b4;border-radius:50%"></div>
<div style="left:14.60px;top:426.44px;width:875.70px;height:0.50px;background:#e6e6e6;"></div>
<div style="left:18.80px;top:420.80px;width:1.80px;height:1.80px;background:#a0a8b4;border-radius:50%"></div>
<div style="left:14.60px;top:426.75px;width:875.70px;height:10.49px;background:#ededed;"></div>
<div style="left:14.60px;top:436.94px;width:875.70px;height:0.50px;background:#e6e6e6;"></div>
<div style="left:18.80px;top:431.29px;width:1.80px;height:1.80px;background:#a0a8b4;border-radius:50%"></div>
<div style="left:14.60px;top:447.44px;width:875.70px;height:0.50px;background:#e6e6e6;"></div>
<div style="left:18.80px;top:441.79px;width:1.80px;height:1.80px;background:#a0a8b4;border-radius:50%"></div>
<div style="left:14.60px;top:447.74px;width:875.70px;height:10.49px;background:#ededed;"></div>
<div style="left:14.60px;top:457.93px;width:875.70px;height:0.50px;background:#e6e6e6;"></div>
<div style="left:18.80px;top:452.28px;width:1.80px;height:1.80px;background:#a0a8b4;border-radius:50%"></div>
<div style="left:14.60px;top:468.43px;width:875.70px;height:0.50px;background:#e6e6e6;"></div>
<div style="left:18.80px;top:462.78px;width:1.80px;height:1.80px;background:#a0a8b4;border-radius:50%"></div>
<div style="left:14.60px;top:468.73px;width:875.70px;height:10.49px;background:#ededed;"></div>
<div style="left:14.60px;top:478.92px;width:875.70px;height:0.50px;background:#e6e6e6;"></div>
<div style="left:18.80px;top:473.27px;width:1.80px;height:1.80px;background:#a0a8b4;border-radius:50%"></div>
<div style="left:14.60px;top:489.42px;width:875.70px;height:0.50px;background:#e6e6e6;"></div>
<div style="left:18.80px;top:483.77px;width:1.80px;height:1.80px;background:#a0a8b4;border-radius:50%"></div>
<div style="left:14.60px;top:489.72px;width:875.70px;height:10.49px;background:#ededed;"></div>
<div style="left:14.60px;top:499.91px;width:875.70px;height:0.50px;background:#e6e6e6;"></div>
<div style="left:18.80px;top:494.26px;width:1.80px;height:1.80px;background:#a0a8b4;border-radius:50%"></div>
<div style="left:14.60px;top:510.41px;width:875.70px;height:0.50px;background:#e6e6e6;"></div>
<div style="left:18.80px;top:504.76px;width:1.80px;height:1.80px;background:#a0a8b4;border-radius:50%"></div>
<div style="left:14.60px;top:510.70px;width:875.70px;height:10.49px;background:#ededed;"></div>
<div style="left:14.60px;top:520.90px;width:875.70px;height:0.50px;background:#e6e6e6;"></div>
<div style="left:18.80px;top:515.25px;width:1.80px;height:1.80px;background:#a0a8b4;border-radius:50%"></div>
<div style="left:14.60px;top:531.40px;width:875.70px;height:0.50px;background:#e6e6e6;"></div>
<svg style="left:17.60px;top:524.05px" width="4.60" height="4.40" viewBox="0 0 46 44"><path d="M23 3l20 38H3z" fill="#f5b021" stroke="#d89210" stroke-width="3"/><path d="M23 16v14M23 33v4" stroke="#5a3a00" stroke-width="5"/></svg>
<div style="left:14.60px;top:531.69px;width:875.70px;height:10.49px;background:#ededed;"></div>
<div style="left:14.60px;top:541.89px;width:875.70px;height:0.50px;background:#e6e6e6;"></div>
<div style="left:18.80px;top:536.24px;width:1.80px;height:1.80px;background:#a0a8b4;border-radius:50%"></div>
<div style="left:14.60px;top:552.39px;width:875.70px;height:0.50px;background:#e6e6e6;"></div>
<div style="left:18.80px;top:546.74px;width:1.80px;height:1.80px;background:#a0a8b4;border-radius:50%"></div>
<div style="left:14.60px;top:552.68px;width:875.70px;height:10.49px;background:#ededed;"></div>
<div style="left:14.60px;top:562.88px;width:875.70px;height:0.50px;background:#e6e6e6;"></div>
<div style="left:18.80px;top:557.23px;width:1.80px;height:1.80px;background:#a0a8b4;border-radius:50%"></div>
<div style="left:14.60px;top:573.38px;width:875.70px;height:0.50px;background:#e6e6e6;"></div>
<div style="left:18.80px;top:567.73px;width:1.80px;height:1.80px;background:#a0a8b4;border-radius:50%"></div>
<div style="left:14.60px;top:573.67px;width:875.70px;height:10.49px;background:#ededed;"></div>
<div style="left:14.60px;top:583.87px;width:875.70px;height:0.50px;background:#e6e6e6;"></div>
<div style="left:18.80px;top:578.22px;width:1.80px;height:1.80px;background:#a0a8b4;border-radius:50%"></div>
<div style="left:98.00px;top:301.40px;width:0.60px;height:283.40px;background:#e2e2e2;"></div>
<div style="left:192.70px;top:301.40px;width:0.60px;height:283.40px;background:#e2e2e2;"></div>
<div style="left:890.30px;top:301.50px;width:9.90px;height:283.20px;background:#fbfbfb;box-sizing:border-box;border-left:0.6px solid #dcdcdc"></div>
<div style="left:890.90px;top:329.30px;width:8.40px;height:245.80px;background:#cdcdcd;"></div>
<svg style="left:892.80px;top:305.20px" width="4.60" height="2.60" viewBox="0 0 46 26"><path d="M4 22L23 5l19 17" fill="none" stroke="#555" stroke-width="7"/></svg>
<svg style="left:892.80px;top:578.60px" width="4.60" height="2.60" viewBox="0 0 46 26"><path d="M4 4l19 17L42 4" fill="none" stroke="#555" stroke-width="7"/></svg>
<div style="left:893.20px;top:450.55px;width:3.60px;height:0.50px;background:#8e8e8e;"></div>
<div style="left:893.20px;top:451.75px;width:3.60px;height:0.50px;background:#8e8e8e;"></div>
<div style="left:893.20px;top:452.95px;width:3.60px;height:0.50px;background:#8e8e8e;"></div>
<div style="left:6.20px;top:585.30px;width:894.00px;height:14.70px;background:#f0f0f0;"></div>
<div style="left:6.20px;top:598.30px;width:894.00px;height:0.90px;background:#d6dce3;"></div>
<div style="left:6.20px;top:599.20px;width:894.00px;height:0.80px;background:#f8f8f8;"></div>
<div style="left:14.30px;top:584.30px;width:885.40px;height:1.20px;background:#a0a0a0;"></div>
<div style="left:6.60px;top:574.70px;width:7.80px;height:22.00px;background:#9db3d4;"></div>
<div style="left:6.6px;top:574.7px;width:7.8px;height:22px;"><span style="position:absolute;left:3.9px;top:11px;transform:translate(-50%,-50%) rotate(-90deg);font-size:6.2px;letter-spacing:-0.1px;color:#14233d;-webkit-text-stroke:0.12px #14233d;white-space:nowrap;line-height:1">Toolbox</span></div>
<div style="left:372.60px;top:584.30px;width:30.00px;height:10.80px;background:#fff;box-sizing:border-box;border:0.8px solid #333;border-top:none;border-radius:0 0 1.5px 1.5px"></div>
<svg style="left:768.70px;top:587.60px" width="6.40" height="7.40" viewBox="0 0 64 74"><path d="M18 26c0-28 28-28 28 0" fill="none" stroke="#e4a51c" stroke-width="6"/><path d="M8 26h48l6 46H2z" fill="#f4bb2a"/></svg>
<svg style="left:804.00px;top:589.20px" width="8.60" height="4.60" viewBox="0 0 86 46"><g fill="none" stroke="#3b8fd6" stroke-width="6"><path d="M28 10c-6 8-6 18 0 26M58 10c6 8 6 18 0 26M14 4c-12 12-12 26 0 38M72 4c12 12 12 26 0 38"/></g><circle cx="43" cy="23" r="7" fill="#3b8fd6"/></svg>
<svg style="left:840.00px;top:588.00px" width="9.00" height="7.00" viewBox="0 0 90 70"><path d="M22 44c-24 0-20-26 0-24 4-24 40-24 44 0 22-2 24 24 2 24z" fill="#dcecfa" stroke="#3b8fd6" stroke-width="8"/><path d="M44 44v16M24 62h42" stroke="#3b8fd6" stroke-width="7" fill="none"/></svg>
<svg style="left:867.80px;top:587.60px" width="7.60" height="7.80" viewBox="0 0 76 78"><path d="M38 4l10 10 14-2 2 14 10 10-10 12-2 14-14-2-10 10-10-10-14 2-2-14L2 36l10-10 2-14 14 2z" fill="#d8f4d8" stroke="#4cb648" stroke-width="6"/><path d="M24 38l10 10 18-20" fill="none" stroke="#4cb648" stroke-width="7"/></svg>
<span style="left:337.06px;top:3.16px;font-size:7.2px;line-height:8.28px;color:#111;transform:scaleX(1.0452);transform-origin:50% 50%;">1805025 - FXFlatMT5-LiveServer - Hedge - FXFlat Bank AG - [US30,M1]</span>
<span style="left:887.83px;top:-0.59px;font-size:8.5px;line-height:9.77px;color:#111;transform:scaleX(0.9000);transform-origin:50% 50%;font-weight:bold;">x</span>
<span style="left:22.90px;top:16.01px;font-size:6.6px;line-height:7.59px;color:#1a1a1a;transform:scaleX(0.8847);transform-origin:0 50%;-webkit-text-stroke:0.12px #1a1a1a;">File</span>
<span style="left:44.20px;top:16.01px;font-size:6.6px;line-height:7.59px;color:#1a1a1a;transform:scaleX(0.9163);transform-origin:0 50%;-webkit-text-stroke:0.12px #1a1a1a;">View</span>
<span style="left:68.80px;top:16.01px;font-size:6.6px;line-height:7.59px;color:#1a1a1a;transform:scaleX(0.9091);transform-origin:0 50%;-webkit-text-stroke:0.12px #1a1a1a;">Insert</span>
<span style="left:95.80px;top:16.01px;font-size:6.6px;line-height:7.59px;color:#1a1a1a;transform:scaleX(0.8856);transform-origin:0 50%;-webkit-text-stroke:0.12px #1a1a1a;">Charts</span>
<span style="left:125.00px;top:16.01px;font-size:6.6px;line-height:7.59px;color:#1a1a1a;transform:scaleX(1.1684);transform-origin:0 50%;-webkit-text-stroke:0.12px #1a1a1a;">Tools</span>
<span style="left:152.00px;top:16.01px;font-size:6.6px;line-height:7.59px;color:#1a1a1a;transform:scaleX(0.9807);transform-origin:0 50%;-webkit-text-stroke:0.12px #1a1a1a;">Window</span>
<span style="left:186.70px;top:16.01px;font-size:6.6px;line-height:7.59px;color:#1a1a1a;transform:scaleX(0.9290);transform-origin:0 50%;-webkit-text-stroke:0.12px #1a1a1a;">Help</span>
<span style="left:894.38px;top:15.86px;font-size:6.5px;line-height:7.47px;color:#c2c2c2;transform:scaleX(0.9000);transform-origin:50% 50%;">x</span>
<span style="left:76.90px;top:30.31px;font-size:6.6px;line-height:7.59px;color:#4690d2;transform:scaleX(0.8091);transform-origin:0 50%;">IDE</span>
<span style="left:175.20px;top:30.41px;font-size:6.6px;line-height:7.59px;color:#1a1a1a;transform:scaleX(0.9586);transform-origin:0 50%;-webkit-text-stroke:0.12px #1a1a1a;">Algo Trading</span>
<span style="left:230.30px;top:30.41px;font-size:6.6px;line-height:7.59px;color:#a6a6a6;transform:scaleX(0.9188);transform-origin:0 50%;">New Order</span>
<span style="left:865.02px;top:34.49px;font-size:3.5px;line-height:4.02px;color:#4cb648;transform:scaleX(0.9749);transform-origin:50% 50%;font-weight:bold;">LVL</span>
<span style="left:14.00px;top:62.61px;font-size:6.6px;line-height:7.59px;color:#2a76bd;transform:scaleX(0.8940);transform-origin:0 50%;-webkit-text-stroke:0.14px #2a76bd;">M1</span>
<span style="left:30.90px;top:62.61px;font-size:6.6px;line-height:7.59px;color:#2a76bd;transform:scaleX(0.9813);transform-origin:0 50%;-webkit-text-stroke:0.14px #2a76bd;">M5</span>
<span style="left:46.30px;top:62.61px;font-size:6.6px;line-height:7.59px;color:#2a76bd;transform:scaleX(0.9199);transform-origin:0 50%;-webkit-text-stroke:0.14px #2a76bd;">M15</span>
<span style="left:62.90px;top:62.61px;font-size:6.6px;line-height:7.59px;color:#2a76bd;transform:scaleX(0.9588);transform-origin:0 50%;-webkit-text-stroke:0.14px #2a76bd;">M30</span>
<span style="left:81.80px;top:62.61px;font-size:6.6px;line-height:7.59px;color:#2a76bd;transform:scaleX(0.9007);transform-origin:0 50%;-webkit-text-stroke:0.14px #2a76bd;">H1</span>
<span style="left:98.70px;top:62.61px;font-size:6.6px;line-height:7.59px;color:#2a76bd;transform:scaleX(0.9126);transform-origin:0 50%;-webkit-text-stroke:0.14px #2a76bd;">H4</span>
<span style="left:115.20px;top:62.61px;font-size:6.6px;line-height:7.59px;color:#2a76bd;transform:scaleX(0.8889);transform-origin:0 50%;-webkit-text-stroke:0.14px #2a76bd;">D1</span>
<span style="left:131.50px;top:62.61px;font-size:6.6px;line-height:7.59px;color:#2a76bd;transform:scaleX(0.8796);transform-origin:0 50%;-webkit-text-stroke:0.14px #2a76bd;">W1</span>
<span style="left:148.00px;top:62.61px;font-size:6.6px;line-height:7.59px;color:#2a76bd;transform:scaleX(0.9741);transform-origin:0 50%;-webkit-text-stroke:0.14px #2a76bd;">MN</span>
<span style="left:8.90px;top:75.26px;font-size:6.5px;line-height:7.47px;color:#1b1b1b;transform:scaleX(0.9016);transform-origin:0 50%;-webkit-text-stroke:0.1px #1b1b1b;">Market Watch: 09:59:36</span>
<span style="left:121.47px;top:75.44px;font-size:6.2px;line-height:7.13px;color:#111;transform:scaleX(0.9000);transform-origin:50% 50%;font-weight:bold;">x</span>
<span style="left:11.50px;top:84.92px;font-size:6.4px;line-height:7.36px;color:#222;transform:scaleX(0.9760);transform-origin:0 50%;">Symbol</span>
<span style="left:70.55px;top:84.92px;font-size:6.4px;line-height:7.36px;color:#222;transform:scaleX(0.9000);transform-origin:100% 50%;">Bid</span>
<span style="left:93.54px;top:84.92px;font-size:6.4px;line-height:7.36px;color:#222;transform:scaleX(0.9000);transform-origin:100% 50%;">Ask</span>
<span style="left:111.00px;top:84.92px;font-size:6.4px;line-height:7.36px;color:#222;transform:scaleX(0.9273);transform-origin:0 50%;">Sp...</span>
<span style="left:19.70px;top:94.90px;font-size:6.5px;line-height:7.47px;color:#1c1c1c;transform:scaleX(0.7912);transform-origin:0 50%;-webkit-text-stroke:0.12px #1c1c1c;">USDJPY</span>
<span style="left:57.10px;top:94.90px;font-size:6.5px;line-height:7.47px;color:#e8343c;transform:scaleX(0.8170);transform-origin:100% 50%;-webkit-text-stroke:0.12px #e8343c;">146.177</span>
<span style="left:81.80px;top:94.90px;font-size:6.5px;line-height:7.47px;color:#2466e2;transform:scaleX(0.8383);transform-origin:100% 50%;-webkit-text-stroke:0.12px #2466e2;">146.192</span>
<span style="left:116.97px;top:94.90px;font-size:6.5px;line-height:7.47px;color:#1c1c1c;transform:scaleX(0.9300);transform-origin:100% 50%;-webkit-text-stroke:0.12px #1c1c1c;">15</span>
<span style="left:19.70px;top:105.37px;font-size:6.5px;line-height:7.47px;color:#1c1c1c;transform:scaleX(0.8123);transform-origin:0 50%;-webkit-text-stroke:0.12px #1c1c1c;">EURUSD</span>
<span style="left:57.10px;top:105.37px;font-size:6.5px;line-height:7.47px;color:#e8343c;transform:scaleX(0.8170);transform-origin:100% 50%;-webkit-text-stroke:0.12px #e8343c;">0.97209</span>
<span style="left:81.80px;top:105.37px;font-size:6.5px;line-height:7.47px;color:#2466e2;transform:scaleX(0.8383);transform-origin:100% 50%;-webkit-text-stroke:0.12px #2466e2;">0.97218</span>
<span style="left:120.58px;top:105.37px;font-size:6.5px;line-height:7.47px;color:#1c1c1c;transform:scaleX(0.9300);transform-origin:100% 50%;-webkit-text-stroke:0.12px #1c1c1c;">9</span>
<span style="left:19.70px;top:115.84px;font-size:6.5px;line-height:7.47px;color:#1c1c1c;transform:scaleX(0.8232);transform-origin:0 50%;-webkit-text-stroke:0.12px #1c1c1c;">GBPUSD</span>
<span style="left:57.10px;top:115.84px;font-size:6.5px;line-height:7.47px;color:#2466e2;transform:scaleX(0.8170);transform-origin:100% 50%;-webkit-text-stroke:0.12px #2466e2;">1.09921</span>
<span style="left:81.80px;top:115.84px;font-size:6.5px;line-height:7.47px;color:#2466e2;transform:scaleX(0.8383);transform-origin:100% 50%;-webkit-text-stroke:0.12px #2466e2;">1.09935</span>
<span style="left:116.97px;top:115.84px;font-size:6.5px;line-height:7.47px;color:#1c1c1c;transform:scaleX(0.9300);transform-origin:100% 50%;-webkit-text-stroke:0.12px #1c1c1c;">14</span>
<span style="left:19.70px;top:126.31px;font-size:6.5px;line-height:7.47px;color:#1c1c1c;transform:scaleX(0.8649);transform-origin:0 50%;-webkit-text-stroke:0.12px #1c1c1c;">.GOLD</span>
<span style="left:57.10px;top:126.31px;font-size:6.5px;line-height:7.47px;color:#e8343c;transform:scaleX(0.8170);transform-origin:100% 50%;-webkit-text-stroke:0.12px #e8343c;">1672.20</span>
<span style="left:81.80px;top:126.31px;font-size:6.5px;line-height:7.47px;color:#2466e2;transform:scaleX(0.8383);transform-origin:100% 50%;-webkit-text-stroke:0.12px #2466e2;">1672.40</span>
<span style="left:116.97px;top:126.31px;font-size:6.5px;line-height:7.47px;color:#1c1c1c;transform:scaleX(0.9300);transform-origin:100% 50%;-webkit-text-stroke:0.12px #1c1c1c;">20</span>
<span style="left:19.70px;top:136.78px;font-size:6.5px;line-height:7.47px;color:#1c1c1c;transform:scaleX(0.8423);transform-origin:0 50%;-webkit-text-stroke:0.12px #1c1c1c;">US30</span>
<span style="left:57.10px;top:136.78px;font-size:6.5px;line-height:7.47px;color:#e8343c;transform:scaleX(0.8681);transform-origin:100% 50%;-webkit-text-stroke:0.12px #e8343c;">29383...</span>
<span style="left:81.80px;top:136.78px;font-size:6.5px;line-height:7.47px;color:#e8343c;transform:scaleX(0.8681);transform-origin:100% 50%;-webkit-text-stroke:0.12px #e8343c;">29384...</span>
<span style="left:113.34px;top:136.78px;font-size:6.5px;line-height:7.47px;color:#1c1c1c;transform:scaleX(0.9300);transform-origin:100% 50%;-webkit-text-stroke:0.12px #1c1c1c;">100</span>
<span style="left:19.70px;top:147.25px;font-size:6.5px;line-height:7.47px;color:#1c1c1c;transform:scaleX(0.9295);transform-origin:0 50%;-webkit-text-stroke:0.12px #1c1c1c;">US30mini</span>
<span style="left:57.10px;top:147.25px;font-size:6.5px;line-height:7.47px;color:#d4622b;transform:scaleX(0.8681);transform-origin:100% 50%;-webkit-text-stroke:0.12px #d4622b;">29383...</span>
<span style="left:81.80px;top:147.25px;font-size:6.5px;line-height:7.47px;color:#d4622b;transform:scaleX(0.8681);transform-origin:100% 50%;-webkit-text-stroke:0.12px #d4622b;">29384...</span>
<span style="left:113.34px;top:147.25px;font-size:6.5px;line-height:7.47px;color:#1c1c1c;transform:scaleX(0.9300);transform-origin:100% 50%;-webkit-text-stroke:0.12px #1c1c1c;">100</span>
<span style="left:19.70px;top:157.72px;font-size:6.5px;line-height:7.47px;color:#1c1c1c;transform:scaleX(0.8151);transform-origin:0 50%;-webkit-text-stroke:0.12px #1c1c1c;">US500</span>
<span style="left:57.10px;top:157.72px;font-size:6.5px;line-height:7.47px;color:#1f6bd0;transform:scaleX(0.8170);transform-origin:100% 50%;-webkit-text-stroke:0.12px #1f6bd0;">3613.56</span>
<span style="left:81.80px;top:157.72px;font-size:6.5px;line-height:7.47px;color:#1f6bd0;transform:scaleX(0.8383);transform-origin:100% 50%;-webkit-text-stroke:0.12px #1f6bd0;">3613.96</span>
<span style="left:116.97px;top:157.72px;font-size:6.5px;line-height:7.47px;color:#1c1c1c;transform:scaleX(0.9300);transform-origin:100% 50%;-webkit-text-stroke:0.12px #1c1c1c;">40</span>
<span style="left:19.70px;top:168.19px;font-size:6.5px;line-height:7.47px;color:#1c1c1c;transform:scaleX(0.8170);transform-origin:0 50%;-webkit-text-stroke:0.12px #1c1c1c;">USTEC</span>
<span style="left:57.10px;top:168.19px;font-size:6.5px;line-height:7.47px;color:#d4622b;transform:scaleX(0.8681);transform-origin:100% 50%;-webkit-text-stroke:0.12px #d4622b;">10886...</span>
<span style="left:81.80px;top:168.19px;font-size:6.5px;line-height:7.47px;color:#d4622b;transform:scaleX(0.8681);transform-origin:100% 50%;-webkit-text-stroke:0.12px #d4622b;">10887...</span>
<span style="left:113.34px;top:168.19px;font-size:6.5px;line-height:7.47px;color:#1c1c1c;transform:scaleX(0.9300);transform-origin:100% 50%;-webkit-text-stroke:0.12px #1c1c1c;">100</span>
<span style="left:19.70px;top:178.66px;font-size:6.5px;line-height:7.47px;color:#1c1c1c;transform:scaleX(0.8704);transform-origin:0 50%;-webkit-text-stroke:0.12px #1c1c1c;">UK100</span>
<span style="left:57.10px;top:178.66px;font-size:6.5px;line-height:7.47px;color:#1f6bd0;transform:scaleX(0.8170);transform-origin:100% 50%;-webkit-text-stroke:0.12px #1f6bd0;">6900.89</span>
<span style="left:81.80px;top:178.66px;font-size:6.5px;line-height:7.47px;color:#d4622b;transform:scaleX(0.8383);transform-origin:100% 50%;-webkit-text-stroke:0.12px #d4622b;">6902.19</span>
<span style="left:113.34px;top:178.66px;font-size:6.5px;line-height:7.47px;color:#1c1c1c;transform:scaleX(0.9300);transform-origin:100% 50%;-webkit-text-stroke:0.12px #1c1c1c;">130</span>
<span style="left:19.70px;top:189.13px;font-size:6.5px;line-height:7.47px;color:#1c1c1c;transform:scaleX(0.8238);transform-origin:0 50%;-webkit-text-stroke:0.12px #1c1c1c;">DE40</span>
<span style="left:57.10px;top:189.13px;font-size:6.5px;line-height:7.47px;color:#1f6bd0;transform:scaleX(0.8681);transform-origin:100% 50%;-webkit-text-stroke:0.12px #1f6bd0;">12233...</span>
<span style="left:81.80px;top:189.13px;font-size:6.5px;line-height:7.47px;color:#1f6bd0;transform:scaleX(0.8681);transform-origin:100% 50%;-webkit-text-stroke:0.12px #1f6bd0;">12234...</span>
<span style="left:116.97px;top:189.13px;font-size:6.5px;line-height:7.47px;color:#1c1c1c;transform:scaleX(0.9300);transform-origin:100% 50%;-webkit-text-stroke:0.12px #1c1c1c;">90</span>
<span style="left:19.70px;top:199.66px;font-size:6.5px;line-height:7.47px;color:#9a9a9a;transform:scaleX(0.9621);transform-origin:0 50%;">click to add...</span>
<span style="left:100.50px;top:199.66px;font-size:6.5px;line-height:7.47px;color:#9a9a9a;transform:scaleX(0.8723);transform-origin:100% 50%;">10 / 396</span>
<span style="left:14.42px;top:286.68px;font-size:6.3px;line-height:7.24px;color:#222;transform:scaleX(0.9728);transform-origin:50% 50%;">Symbols</span>
<span style="left:49.00px;top:286.68px;font-size:6.3px;line-height:7.24px;color:#8c8c8c;transform:scaleX(0.9351);transform-origin:0 50%;">Details</span>
<span style="left:71.48px;top:286.68px;font-size:6.3px;line-height:7.24px;color:#8c8c8c;transform:scaleX(0.9000);transform-origin:50% 50%;">|</span>
<span style="left:78.00px;top:286.68px;font-size:6.3px;line-height:7.24px;color:#8c8c8c;transform:scaleX(0.9941);transform-origin:0 50%;">Trading</span>
<span style="left:103.58px;top:286.68px;font-size:6.3px;line-height:7.24px;color:#8c8c8c;transform:scaleX(0.9000);transform-origin:50% 50%;">|</span>
<span style="left:110.30px;top:286.68px;font-size:6.3px;line-height:7.24px;color:#8c8c8c;transform:scaleX(0.9469);transform-origin:0 50%;">Ticks</span>
<span style="left:135.90px;top:289.38px;font-size:6.3px;line-height:7.24px;color:#222;transform:scaleX(0.8838);transform-origin:0 50%;-webkit-text-stroke:0.1px #222;">US30,M1</span>
<span style="left:184.00px;top:289.74px;font-size:6.2px;line-height:7.13px;color:#8c8c8c;transform:scaleX(0.8232);transform-origin:0 50%;">VPS</span>
<span style="left:8.63px;top:300.35px;font-size:6px;line-height:6.90px;color:#111;transform:scaleX(0.9000);transform-origin:50% 50%;font-weight:bold;">x</span>
<span style="left:18.30px;top:302.92px;font-size:6.4px;line-height:7.36px;color:#222;transform:scaleX(1.0022);transform-origin:0 50%;-webkit-text-stroke:0.1px #222;">Time</span>
<span style="left:101.40px;top:302.92px;font-size:6.4px;line-height:7.36px;color:#222;transform:scaleX(0.9383);transform-origin:0 50%;-webkit-text-stroke:0.1px #222;">Source</span>
<span style="left:196.20px;top:302.92px;font-size:6.4px;line-height:7.36px;color:#222;transform:scaleX(0.9214);transform-origin:0 50%;-webkit-text-stroke:0.1px #222;">Message</span>
<span style="left:25.80px;top:312.93px;font-size:6.3px;line-height:7.24px;color:#1c1c1c;transform:scaleX(0.8965);transform-origin:0 50%;-webkit-text-stroke:0.08px #1c1c1c;">2022.10.12 01:52:09.224</span>
<span style="left:100.50px;top:312.93px;font-size:6.3px;line-height:7.24px;color:#1c1c1c;transform:scaleX(1.0548);transform-origin:0 50%;-webkit-text-stroke:0.08px #1c1c1c;">Terminal</span>
<span style="left:195.00px;top:312.93px;font-size:6.3px;line-height:7.24px;color:#1c1c1c;transform:scaleX(0.9748);transform-origin:0 50%;-webkit-text-stroke:0.08px #1c1c1c;">C:\Users\Administrator\AppData\Roaming\MetaQuotes\Terminal\9EB2973C469D24060397BB5158EA73A5</span>
<span style="left:25.80px;top:323.42px;font-size:6.3px;line-height:7.24px;color:#1c1c1c;transform:scaleX(0.8965);transform-origin:0 50%;-webkit-text-stroke:0.17px #1c1c1c;">2022.10.12 01:52:10.178</span>
<span style="left:100.50px;top:323.42px;font-size:6.3px;line-height:7.24px;color:#1c1c1c;transform:scaleX(1.0089);transform-origin:0 50%;-webkit-text-stroke:0.17px #1c1c1c;">Network</span>
<span style="left:195.00px;top:323.42px;font-size:6.3px;line-height:7.24px;color:#1c1c1c;transform:scaleX(0.9610);transform-origin:0 50%;-webkit-text-stroke:0.17px #1c1c1c;">&#x27;1805025&#x27;: authorized on FXFlatMT5-LiveServer through Access Server 1 (ping: 1.40 ms, build 3091)</span>
<span style="left:25.80px;top:333.92px;font-size:6.3px;line-height:7.24px;color:#1c1c1c;transform:scaleX(0.8965);transform-origin:0 50%;-webkit-text-stroke:0.08px #1c1c1c;">2022.10.12 01:52:10.178</span>
<span style="left:100.50px;top:333.92px;font-size:6.3px;line-height:7.24px;color:#1c1c1c;transform:scaleX(1.0089);transform-origin:0 50%;-webkit-text-stroke:0.08px #1c1c1c;">Network</span>
<span style="left:195.00px;top:333.92px;font-size:6.3px;line-height:7.24px;color:#1c1c1c;transform:scaleX(0.9584);transform-origin:0 50%;-webkit-text-stroke:0.08px #1c1c1c;">&#x27;1805025&#x27;: previous successful authorization performed from 185.95.16.195 on 2022.10.11 11:48:16</span>
<span style="left:25.80px;top:344.41px;font-size:6.3px;line-height:7.24px;color:#1c1c1c;transform:scaleX(0.8965);transform-origin:0 50%;-webkit-text-stroke:0.17px #1c1c1c;">2022.10.12 01:52:10.200</span>
<span style="left:100.50px;top:344.41px;font-size:6.3px;line-height:7.24px;color:#1c1c1c;transform:scaleX(1.0089);transform-origin:0 50%;-webkit-text-stroke:0.17px #1c1c1c;">Network</span>
<span style="left:195.00px;top:344.41px;font-size:6.3px;line-height:7.24px;color:#1c1c1c;transform:scaleX(0.9630);transform-origin:0 50%;-webkit-text-stroke:0.17px #1c1c1c;">&#x27;1805025&#x27;: terminal synchronized with FXFlat Bank AG: 0 positions, 0 orders, 396 symbols, 0 spreads</span>
<span style="left:25.80px;top:354.91px;font-size:6.3px;line-height:7.24px;color:#1c1c1c;transform:scaleX(0.8965);transform-origin:0 50%;-webkit-text-stroke:0.08px #1c1c1c;">2022.10.12 01:52:10.200</span>
<span style="left:100.50px;top:354.91px;font-size:6.3px;line-height:7.24px;color:#1c1c1c;transform:scaleX(1.0089);transform-origin:0 50%;-webkit-text-stroke:0.08px #1c1c1c;">Network</span>
<span style="left:195.00px;top:354.91px;font-size:6.3px;line-height:7.24px;color:#1c1c1c;transform:scaleX(0.9675);transform-origin:0 50%;-webkit-text-stroke:0.08px #1c1c1c;">&#x27;1805025&#x27;: trading has been disabled - disabled on server</span>
<span style="left:25.80px;top:365.40px;font-size:6.3px;line-height:7.24px;color:#1c1c1c;transform:scaleX(0.8965);transform-origin:0 50%;-webkit-text-stroke:0.17px #1c1c1c;">2022.10.12 01:52:10.387</span>
<span style="left:100.50px;top:365.40px;font-size:6.3px;line-height:7.24px;color:#1c1c1c;transform:scaleX(1.0214);transform-origin:0 50%;-webkit-text-stroke:0.17px #1c1c1c;">MQL5.community</span>
<span style="left:195.00px;top:365.40px;font-size:6.3px;line-height:7.24px;color:#1c1c1c;transform:scaleX(0.9975);transform-origin:0 50%;-webkit-text-stroke:0.17px #1c1c1c;">activated for &#x27;sofitlmm.trader&#x27;, balance: 0.00</span>
<span style="left:25.80px;top:375.89px;font-size:6.3px;line-height:7.24px;color:#fff;transform:scaleX(0.8965);transform-origin:0 50%;-webkit-text-stroke:0.08px #fff;">2022.10.12 01:52:10.495</span>
<span style="left:100.50px;top:375.89px;font-size:6.3px;line-height:7.24px;color:#fff;transform:scaleX(0.9631);transform-origin:0 50%;-webkit-text-stroke:0.08px #fff;">MQL5.chats</span>
<span style="left:195.00px;top:375.89px;font-size:6.3px;line-height:7.24px;color:#fff;transform:scaleX(1.0263);transform-origin:0 50%;-webkit-text-stroke:0.08px #fff;">activated for &#x27;sofitlmm.trader&#x27;</span>
<span style="left:25.80px;top:386.39px;font-size:6.3px;line-height:7.24px;color:#1c1c1c;transform:scaleX(0.9026);transform-origin:0 50%;-webkit-text-stroke:0.17px #1c1c1c;">2022.10.12 01:52:11.137</span>
<span style="left:100.50px;top:386.39px;font-size:6.3px;line-height:7.24px;color:#1c1c1c;transform:scaleX(1.0089);transform-origin:0 50%;-webkit-text-stroke:0.17px #1c1c1c;">Network</span>
<span style="left:195.00px;top:386.39px;font-size:6.3px;line-height:7.24px;color:#1c1c1c;transform:scaleX(0.9741);transform-origin:0 50%;-webkit-text-stroke:0.17px #1c1c1c;">&#x27;1805025&#x27;: scanning network for access points</span>
<span style="left:25.80px;top:396.88px;font-size:6.3px;line-height:7.24px;color:#1c1c1c;transform:scaleX(0.8965);transform-origin:0 50%;-webkit-text-stroke:0.08px #1c1c1c;">2022.10.12 01:52:26.180</span>
<span style="left:100.50px;top:396.88px;font-size:6.3px;line-height:7.24px;color:#1c1c1c;transform:scaleX(1.0089);transform-origin:0 50%;-webkit-text-stroke:0.08px #1c1c1c;">Network</span>
<span style="left:195.00px;top:396.88px;font-size:6.3px;line-height:7.24px;color:#1c1c1c;transform:scaleX(0.9837);transform-origin:0 50%;-webkit-text-stroke:0.08px #1c1c1c;">&#x27;1805025&#x27;: scanning network finished</span>
<span style="left:25.80px;top:407.38px;font-size:6.3px;line-height:7.24px;color:#1c1c1c;transform:scaleX(0.8965);transform-origin:0 50%;-webkit-text-stroke:0.17px #1c1c1c;">2022.10.12 07:22:32.952</span>
<span style="left:100.50px;top:407.38px;font-size:6.3px;line-height:7.24px;color:#1c1c1c;transform:scaleX(0.9083);transform-origin:0 50%;-webkit-text-stroke:0.17px #1c1c1c;">Experts</span>
<span style="left:195.00px;top:407.38px;font-size:6.3px;line-height:7.24px;color:#1c1c1c;transform:scaleX(0.9998);transform-origin:0 50%;-webkit-text-stroke:0.17px #1c1c1c;">automated trading is enabled</span>
<span style="left:25.80px;top:417.88px;font-size:6.3px;line-height:7.24px;color:#1c1c1c;transform:scaleX(0.8965);transform-origin:0 50%;-webkit-text-stroke:0.08px #1c1c1c;">2022.10.12 07:22:34.433</span>
<span style="left:100.50px;top:417.88px;font-size:6.3px;line-height:7.24px;color:#1c1c1c;transform:scaleX(0.9083);transform-origin:0 50%;-webkit-text-stroke:0.08px #1c1c1c;">Experts</span>
<span style="left:195.00px;top:417.88px;font-size:6.3px;line-height:7.24px;color:#1c1c1c;transform:scaleX(0.9992);transform-origin:0 50%;-webkit-text-stroke:0.08px #1c1c1c;">automated trading is disabled</span>
<span style="left:25.80px;top:428.37px;font-size:6.3px;line-height:7.24px;color:#1c1c1c;transform:scaleX(0.8965);transform-origin:0 50%;-webkit-text-stroke:0.17px #1c1c1c;">2022.10.12 07:25:03.571</span>
<span style="left:100.50px;top:428.37px;font-size:6.3px;line-height:7.24px;color:#1c1c1c;transform:scaleX(1.0089);transform-origin:0 50%;-webkit-text-stroke:0.17px #1c1c1c;">Network</span>
<span style="left:195.00px;top:428.37px;font-size:6.3px;line-height:7.24px;color:#1c1c1c;transform:scaleX(0.9782);transform-origin:0 50%;-webkit-text-stroke:0.17px #1c1c1c;">&#x27;1805025&#x27;: connecting to an access point with 99 % quality (previous: 99 %)</span>
<span style="left:25.80px;top:438.87px;font-size:6.3px;line-height:7.24px;color:#1c1c1c;transform:scaleX(0.8965);transform-origin:0 50%;-webkit-text-stroke:0.08px #1c1c1c;">2022.10.12 07:25:03.571</span>
<span style="left:100.50px;top:438.87px;font-size:6.3px;line-height:7.24px;color:#1c1c1c;transform:scaleX(1.0089);transform-origin:0 50%;-webkit-text-stroke:0.08px #1c1c1c;">Network</span>
<span style="left:195.00px;top:438.87px;font-size:6.3px;line-height:7.24px;color:#1c1c1c;transform:scaleX(0.9649);transform-origin:0 50%;-webkit-text-stroke:0.08px #1c1c1c;">&#x27;1805025&#x27;: disconnected from FXFlatMT5-LiveServer</span>
<span style="left:25.80px;top:449.36px;font-size:6.3px;line-height:7.24px;color:#1c1c1c;transform:scaleX(0.8965);transform-origin:0 50%;-webkit-text-stroke:0.17px #1c1c1c;">2022.10.12 07:25:03.738</span>
<span style="left:100.50px;top:449.36px;font-size:6.3px;line-height:7.24px;color:#1c1c1c;transform:scaleX(1.0089);transform-origin:0 50%;-webkit-text-stroke:0.17px #1c1c1c;">Network</span>
<span style="left:195.00px;top:449.36px;font-size:6.3px;line-height:7.24px;color:#1c1c1c;transform:scaleX(0.9610);transform-origin:0 50%;-webkit-text-stroke:0.17px #1c1c1c;">&#x27;1805025&#x27;: authorized on FXFlatMT5-LiveServer through Access Server 2 (ping: 2.54 ms, build 3091)</span>
<span style="left:25.80px;top:459.86px;font-size:6.3px;line-height:7.24px;color:#1c1c1c;transform:scaleX(0.8965);transform-origin:0 50%;-webkit-text-stroke:0.08px #1c1c1c;">2022.10.12 07:25:03.738</span>
<span style="left:100.50px;top:459.86px;font-size:6.3px;line-height:7.24px;color:#1c1c1c;transform:scaleX(1.0089);transform-origin:0 50%;-webkit-text-stroke:0.08px #1c1c1c;">Network</span>
<span style="left:195.00px;top:459.86px;font-size:6.3px;line-height:7.24px;color:#1c1c1c;transform:scaleX(0.9552);transform-origin:0 50%;-webkit-text-stroke:0.08px #1c1c1c;">&#x27;1805025&#x27;: previous successful authorization performed from 185.95.16.195 on 2022.10.12 03:52:21</span>
<span style="left:25.80px;top:470.35px;font-size:6.3px;line-height:7.24px;color:#1c1c1c;transform:scaleX(0.8965);transform-origin:0 50%;-webkit-text-stroke:0.17px #1c1c1c;">2022.10.12 07:25:03.784</span>
<span style="left:100.50px;top:470.35px;font-size:6.3px;line-height:7.24px;color:#1c1c1c;transform:scaleX(1.0089);transform-origin:0 50%;-webkit-text-stroke:0.17px #1c1c1c;">Network</span>
<span style="left:195.00px;top:470.35px;font-size:6.3px;line-height:7.24px;color:#1c1c1c;transform:scaleX(0.9630);transform-origin:0 50%;-webkit-text-stroke:0.17px #1c1c1c;">&#x27;1805025&#x27;: terminal synchronized with FXFlat Bank AG: 0 positions, 0 orders, 396 symbols, 0 spreads</span>
<span style="left:25.80px;top:480.85px;font-size:6.3px;line-height:7.24px;color:#1c1c1c;transform:scaleX(0.8965);transform-origin:0 50%;-webkit-text-stroke:0.08px #1c1c1c;">2022.10.12 07:25:03.784</span>
<span style="left:100.50px;top:480.85px;font-size:6.3px;line-height:7.24px;color:#1c1c1c;transform:scaleX(1.0089);transform-origin:0 50%;-webkit-text-stroke:0.08px #1c1c1c;">Network</span>
<span style="left:195.00px;top:480.85px;font-size:6.3px;line-height:7.24px;color:#1c1c1c;transform:scaleX(0.9675);transform-origin:0 50%;-webkit-text-stroke:0.08px #1c1c1c;">&#x27;1805025&#x27;: trading has been disabled - disabled on server</span>
<span style="left:25.80px;top:491.34px;font-size:6.3px;line-height:7.24px;color:#1c1c1c;transform:scaleX(0.8965);transform-origin:0 50%;-webkit-text-stroke:0.17px #1c1c1c;">2022.10.12 07:52:12.014</span>
<span style="left:100.50px;top:491.34px;font-size:6.3px;line-height:7.24px;color:#1c1c1c;transform:scaleX(1.0089);transform-origin:0 50%;-webkit-text-stroke:0.17px #1c1c1c;">Network</span>
<span style="left:195.00px;top:491.34px;font-size:6.3px;line-height:7.24px;color:#1c1c1c;transform:scaleX(0.9741);transform-origin:0 50%;-webkit-text-stroke:0.17px #1c1c1c;">&#x27;1805025&#x27;: scanning network for access points</span>
<span style="left:25.80px;top:501.84px;font-size:6.3px;line-height:7.24px;color:#1c1c1c;transform:scaleX(0.8965);transform-origin:0 50%;-webkit-text-stroke:0.08px #1c1c1c;">2022.10.12 07:52:27.087</span>
<span style="left:100.50px;top:501.84px;font-size:6.3px;line-height:7.24px;color:#1c1c1c;transform:scaleX(1.0089);transform-origin:0 50%;-webkit-text-stroke:0.08px #1c1c1c;">Network</span>
<span style="left:195.00px;top:501.84px;font-size:6.3px;line-height:7.24px;color:#1c1c1c;transform:scaleX(0.9837);transform-origin:0 50%;-webkit-text-stroke:0.08px #1c1c1c;">&#x27;1805025&#x27;: scanning network finished</span>
<span style="left:25.80px;top:512.33px;font-size:6.3px;line-height:7.24px;color:#1c1c1c;transform:scaleX(0.8965);transform-origin:0 50%;-webkit-text-stroke:0.17px #1c1c1c;">2022.10.12 07:52:27.087</span>
<span style="left:100.50px;top:512.33px;font-size:6.3px;line-height:7.24px;color:#1c1c1c;transform:scaleX(1.0089);transform-origin:0 50%;-webkit-text-stroke:0.17px #1c1c1c;">Network</span>
<span style="left:195.00px;top:512.33px;font-size:6.3px;line-height:7.24px;color:#1c1c1c;transform:scaleX(0.9801);transform-origin:0 50%;-webkit-text-stroke:0.17px #1c1c1c;">&#x27;1805025&#x27;: auto connecting to a better access point with 99 % quality (previous: 99 %)</span>
<span style="left:25.80px;top:522.83px;font-size:6.3px;line-height:7.24px;color:#1c1c1c;transform:scaleX(0.8965);transform-origin:0 50%;-webkit-text-stroke:0.08px #1c1c1c;">2022.10.12 07:52:27.087</span>
<span style="left:100.50px;top:522.83px;font-size:6.3px;line-height:7.24px;color:#1c1c1c;transform:scaleX(1.0089);transform-origin:0 50%;-webkit-text-stroke:0.08px #1c1c1c;">Network</span>
<span style="left:195.00px;top:522.83px;font-size:6.3px;line-height:7.24px;color:#1c1c1c;transform:scaleX(0.9653);transform-origin:0 50%;-webkit-text-stroke:0.08px #1c1c1c;">&#x27;1805025&#x27;: connection to FXFlatMT5-LiveServer lost</span>
<span style="left:25.80px;top:533.32px;font-size:6.3px;line-height:7.24px;color:#1c1c1c;transform:scaleX(0.8965);transform-origin:0 50%;-webkit-text-stroke:0.17px #1c1c1c;">2022.10.12 07:52:27.604</span>
<span style="left:100.50px;top:533.32px;font-size:6.3px;line-height:7.24px;color:#1c1c1c;transform:scaleX(1.0089);transform-origin:0 50%;-webkit-text-stroke:0.17px #1c1c1c;">Network</span>
<span style="left:195.00px;top:533.32px;font-size:6.3px;line-height:7.24px;color:#1c1c1c;transform:scaleX(0.9610);transform-origin:0 50%;-webkit-text-stroke:0.17px #1c1c1c;">&#x27;1805025&#x27;: authorized on FXFlatMT5-LiveServer through Access Server 1 (ping: 1.46 ms, build 3091)</span>
<span style="left:25.80px;top:543.82px;font-size:6.3px;line-height:7.24px;color:#1c1c1c;transform:scaleX(0.8965);transform-origin:0 50%;-webkit-text-stroke:0.08px #1c1c1c;">2022.10.12 07:52:27.604</span>
<span style="left:100.50px;top:543.82px;font-size:6.3px;line-height:7.24px;color:#1c1c1c;transform:scaleX(1.0089);transform-origin:0 50%;-webkit-text-stroke:0.08px #1c1c1c;">Network</span>
<span style="left:195.00px;top:543.82px;font-size:6.3px;line-height:7.24px;color:#1c1c1c;transform:scaleX(0.9552);transform-origin:0 50%;-webkit-text-stroke:0.08px #1c1c1c;">&#x27;1805025&#x27;: previous successful authorization performed from 185.95.16.195 on 2022.10.12 09:25:03</span>
<span style="left:25.80px;top:554.31px;font-size:6.3px;line-height:7.24px;color:#1c1c1c;transform:scaleX(0.8965);transform-origin:0 50%;-webkit-text-stroke:0.17px #1c1c1c;">2022.10.12 07:52:27.621</span>
<span style="left:100.50px;top:554.31px;font-size:6.3px;line-height:7.24px;color:#1c1c1c;transform:scaleX(1.0089);transform-origin:0 50%;-webkit-text-stroke:0.17px #1c1c1c;">Network</span>
<span style="left:195.00px;top:554.31px;font-size:6.3px;line-height:7.24px;color:#1c1c1c;transform:scaleX(0.9630);transform-origin:0 50%;-webkit-text-stroke:0.17px #1c1c1c;">&#x27;1805025&#x27;: terminal synchronized with FXFlat Bank AG: 0 positions, 0 orders, 396 symbols, 0 spreads</span>
<span style="left:25.80px;top:564.81px;font-size:6.3px;line-height:7.24px;color:#1c1c1c;transform:scaleX(0.8965);transform-origin:0 50%;-webkit-text-stroke:0.08px #1c1c1c;">2022.10.12 07:52:27.621</span>
<span style="left:100.50px;top:564.81px;font-size:6.3px;line-height:7.24px;color:#1c1c1c;transform:scaleX(1.0089);transform-origin:0 50%;-webkit-text-stroke:0.08px #1c1c1c;">Network</span>
<span style="left:195.00px;top:564.81px;font-size:6.3px;line-height:7.24px;color:#1c1c1c;transform:scaleX(0.9675);transform-origin:0 50%;-webkit-text-stroke:0.08px #1c1c1c;">&#x27;1805025&#x27;: trading has been disabled - disabled on server</span>
<span style="left:25.80px;top:575.30px;font-size:6.3px;line-height:7.24px;color:#1c1c1c;transform:scaleX(0.8965);transform-origin:0 50%;-webkit-text-stroke:0.17px #1c1c1c;">2022.10.12 07:55:01.366</span>
<span style="left:100.50px;top:575.30px;font-size:6.3px;line-height:7.24px;color:#1c1c1c;transform:scaleX(0.9083);transform-origin:0 50%;-webkit-text-stroke:0.17px #1c1c1c;">Experts</span>
<span style="left:195.00px;top:575.30px;font-size:6.3px;line-height:7.24px;color:#1c1c1c;transform:scaleX(0.9729);transform-origin:0 50%;-webkit-text-stroke:0.17px #1c1c1c;">expert Myfxbook (US30,M1) loaded successfully</span>
<span style="left:21.20px;top:586.58px;font-size:6.3px;line-height:7.24px;color:#8c8c8c;transform:scaleX(0.9557);transform-origin:0 50%;">Trade</span>
<span style="left:47.40px;top:586.58px;font-size:6.3px;line-height:7.24px;color:#8c8c8c;transform:scaleX(0.9170);transform-origin:0 50%;">Exposure</span>
<span style="left:82.80px;top:586.58px;font-size:6.3px;line-height:7.24px;color:#8c8c8c;transform:scaleX(0.9952);transform-origin:0 50%;">History</span>
<span style="left:113.00px;top:586.58px;font-size:6.3px;line-height:7.24px;color:#8c8c8c;transform:scaleX(0.9333);transform-origin:0 50%;">News</span>
<span style="left:139.00px;top:586.58px;font-size:6.3px;line-height:7.24px;color:#8c8c8c;transform:scaleX(0.9860);transform-origin:0 50%;">Mailbox</span>
<span style="left:174.60px;top:586.58px;font-size:6.3px;line-height:7.24px;color:#8c8c8c;transform:scaleX(0.9780);transform-origin:0 50%;">Calendar</span>
<span style="left:210.00px;top:586.58px;font-size:6.3px;line-height:7.24px;color:#8c8c8c;transform:scaleX(1.0017);transform-origin:0 50%;">Company</span>
<span style="left:248.00px;top:586.58px;font-size:6.3px;line-height:7.24px;color:#8c8c8c;transform:scaleX(0.9311);transform-origin:0 50%;">Alerts</span>
<span style="left:274.00px;top:586.58px;font-size:6.3px;line-height:7.24px;color:#8c8c8c;transform:scaleX(0.9682);transform-origin:0 50%;">Articles</span>
<span style="left:309.00px;top:586.58px;font-size:6.3px;line-height:7.24px;color:#8c8c8c;transform:scaleX(0.9051);transform-origin:0 50%;">Code Base</span>
<span style="left:348.00px;top:586.58px;font-size:6.3px;line-height:7.24px;color:#8c8c8c;transform:scaleX(0.8895);transform-origin:0 50%;">Experts</span>
<span style="left:41.58px;top:586.58px;font-size:6.3px;line-height:7.24px;color:#8c8c8c;transform:scaleX(0.9000);transform-origin:50% 50%;">|</span>
<span style="left:76.48px;top:586.58px;font-size:6.3px;line-height:7.24px;color:#8c8c8c;transform:scaleX(0.9000);transform-origin:50% 50%;">|</span>
<span style="left:106.98px;top:586.58px;font-size:6.3px;line-height:7.24px;color:#8c8c8c;transform:scaleX(0.9000);transform-origin:50% 50%;">|</span>
<span style="left:132.68px;top:586.58px;font-size:6.3px;line-height:7.24px;color:#8c8c8c;transform:scaleX(0.9000);transform-origin:50% 50%;">|</span>
<span style="left:168.78px;top:586.58px;font-size:6.3px;line-height:7.24px;color:#8c8c8c;transform:scaleX(0.9000);transform-origin:50% 50%;">|</span>
<span style="left:204.18px;top:586.58px;font-size:6.3px;line-height:7.24px;color:#8c8c8c;transform:scaleX(0.9000);transform-origin:50% 50%;">|</span>
<span style="left:241.58px;top:586.58px;font-size:6.3px;line-height:7.24px;color:#8c8c8c;transform:scaleX(0.9000);transform-origin:50% 50%;">|</span>
<span style="left:267.78px;top:586.58px;font-size:6.3px;line-height:7.24px;color:#8c8c8c;transform:scaleX(0.9000);transform-origin:50% 50%;">|</span>
<span style="left:302.68px;top:586.58px;font-size:6.3px;line-height:7.24px;color:#8c8c8c;transform:scaleX(0.9000);transform-origin:50% 50%;">|</span>
<span style="left:341.88px;top:586.58px;font-size:6.3px;line-height:7.24px;color:#8c8c8c;transform:scaleX(0.9000);transform-origin:50% 50%;">|</span>
<span style="left:161.53px;top:589.38px;font-size:4.2px;line-height:4.83px;color:#e02020;transform:scaleX(0.9000);transform-origin:50% 50%;">7</span>
<span style="left:295.73px;top:589.38px;font-size:4.2px;line-height:4.83px;color:#e02020;transform:scaleX(0.9000);transform-origin:50% 50%;">2</span>
<span style="left:377.60px;top:586.38px;font-size:6.3px;line-height:7.24px;color:#111;transform:scaleX(0.9634);transform-origin:0 50%;">Journal</span>
<span style="left:778.30px;top:587.88px;font-size:6.3px;line-height:7.24px;color:#222;transform:scaleX(0.9974);transform-origin:0 50%;-webkit-text-stroke:0.1px #222;">Market</span>
<span style="left:814.50px;top:587.88px;font-size:6.3px;line-height:7.24px;color:#222;transform:scaleX(0.9295);transform-origin:0 50%;-webkit-text-stroke:0.1px #222;">Signals</span>
<span style="left:850.80px;top:587.88px;font-size:6.3px;line-height:7.24px;color:#222;transform:scaleX(0.7851);transform-origin:0 50%;-webkit-text-stroke:0.1px #222;">VPS</span>
<span style="left:878.00px;top:587.88px;font-size:6.3px;line-height:7.24px;color:#222;transform:scaleX(0.9617);transform-origin:0 50%;-webkit-text-stroke:0.1px #222;">Tester</span>
</div></body></html>
